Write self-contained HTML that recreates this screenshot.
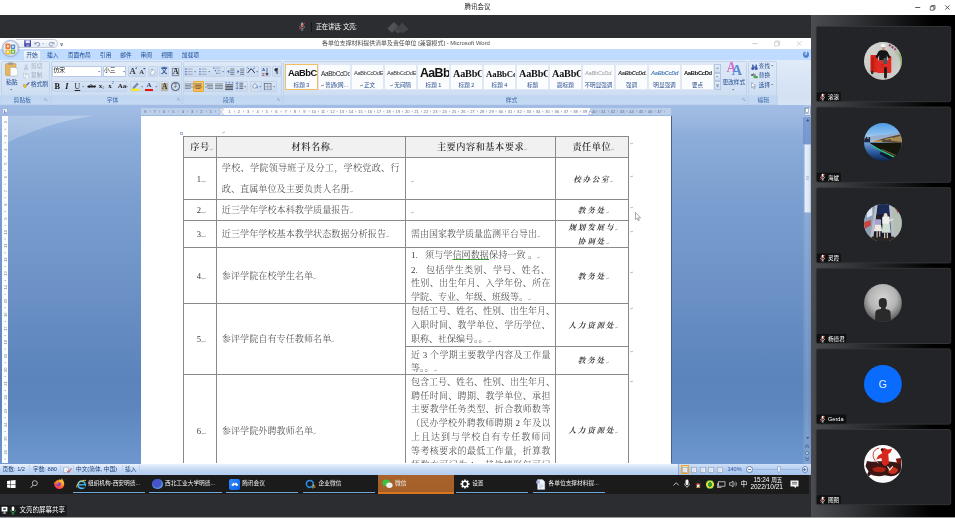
<!DOCTYPE html><html lang="zh"><head><meta charset="utf-8"><title>腾讯会议</title><style>
*{box-sizing:border-box;margin:0;padding:0}
html,body{width:955px;height:518px;overflow:hidden;background:#fff}
body{font-family:"Liberation Sans","Noto Sans CJK SC",sans-serif;position:relative;color:#000}
.a{position:absolute}
.t{position:absolute;white-space:nowrap;line-height:1}
.serif{font-family:"Liberation Serif","Noto Serif CJK SC",serif}
/* top bars */
#top{left:0;top:0;width:955px;height:15px;background:#fff}
#dark{left:0;top:15px;width:811px;height:23px;background:#2b2d30}
#bottomdark{left:0;top:494px;width:811px;height:24px;background:#2b2d30}
#panel{left:811px;top:15px;width:144px;height:503px;background:linear-gradient(to right,#4a4c50 0%,#37383b 25%,#1c1d1f 55%,#000 85%)}
.tile{position:absolute;left:816px;width:135px;height:76px;background:#232427;border:1px solid #313336;border-radius:2px}
.av{position:absolute;left:864.3px;width:37.9px;height:37.9px;border-radius:50%;overflow:hidden}
.nm{position:absolute;left:817px;height:9.5px;background:#17181a;border-radius:1px}
.nm span{position:absolute;left:9.5px;top:1.8px;font-size:5.8px;line-height:1;color:#fff;white-space:nowrap}
/* word */
#word{left:0;top:38px;width:811px;height:436px;background:#bfdbff;overflow:hidden}
#wtitle{left:0;top:0;width:811px;height:11px;background:#fff}
#tabs{left:0;top:11px;width:811px;height:11px;background:#bfdbff}
#ribbon{left:0;top:22px;width:811px;height:45px;background:linear-gradient(to bottom,#e1ebf8 0%,#dbe6f6 30%,#d3e1f3 80%,#d7e4f5 100%)}
#rlabels{left:0;top:58px;width:778px;height:8.5px;background:#c1d7f1}
.gsep{position:absolute;top:23px;width:1px;height:43px;background:linear-gradient(to bottom,#d9e6f7,#a9c4e6)}
.gl{position:absolute;top:59.3px;font-size:5.8px;line-height:1;color:#3e6aaa;white-space:nowrap}
#doc{left:0;top:67px;width:811px;height:360px;background:linear-gradient(to bottom,#a2bde5 0%,#9db9e2 3%,#8cadda 9%,#7a9ecf 27%,#6a90c5 54%,#5b84bc 76%,#5d86bf 84%,#6e98cf 100%)}
#page{left:141.4px;top:10.8px;width:529.6px;height:352px;background:#fff}
#status{left:0;top:427px;width:811px;height:9.4px;background:linear-gradient(to bottom,#d6e6fa,#bed6f4 50%,#a9c8ef)}
#taskbar{left:0;top:474.4px;width:811px;height:19.4px;background:#1c1d1f}
#root{position:absolute;left:0;top:0;width:955px;height:518px;overflow:hidden;will-change:transform;transform:translateZ(0)}</style></head><body><div id="root">
<div class="a" id="top"></div>
<div class="a" id="dark"></div>
<div class="a" id="panel"></div>
<div class="a" id="word"><div class="a" id="wtitle"></div><div class="a" id="tabs"></div><div class="a" id="ribbon"></div><div class="a" id="rlabels"></div><div class="a" id="doc"><div class="a" id="page"></div></div><div class="a" id="status"></div></div>
<div class="a" id="taskbar"></div>
<div class="a" id="bottomdark"></div>
<div class="a" style="left:16px;top:39px;width:41.5px;height:9.4px;border:0.6px solid #c6cdd9;border-left:none;border-radius:0 5px 5px 0;background:linear-gradient(#fbfcfe,#e4ebf5)"></div>
<div class="a" style="left:2.1px;top:40px;width:17.4px;height:17.4px;border-radius:50%;background:radial-gradient(circle at 50% 35%,#ffffff 0%,#e6edf7 45%,#b9c9e0 100%);border:0.6px solid #9fb2cf;box-shadow:0 0 1.5px rgba(80,100,140,.5)"></div>
<svg class="a" style="left:5.4px;top:42.8px" width="10.6" height="12" viewBox="0 0 10.6 12"><rect x="0.4" y="0.6" width="5" height="5.4" rx="1" fill="#ee7a32"/><rect x="5.8" y="1.4" width="4.4" height="4.6" rx=".9" fill="#4a8ad8"/><rect x="0.4" y="6.4" width="5" height="5" rx="1" fill="#f2bc30"/><rect x="5.8" y="6.4" width="4.4" height="4.4" rx=".9" fill="#72b23e"/><rect x="1.9" y="2.3" width="2" height="2" fill="#fff" opacity=".85"/><rect x="7" y="2.8" width="1.9" height="1.9" fill="#fff" opacity=".85"/><rect x="1.9" y="7.9" width="2" height="2" fill="#fff" opacity=".85"/><rect x="7" y="7.7" width="1.9" height="1.9" fill="#fff" opacity=".85"/></svg>
<svg class="a" style="left:23.6px;top:40px" width="7.6" height="7" viewBox="0 0 7.6 7"><rect x="0.2" y="0.2" width="7" height="6.6" rx=".5" fill="#4646a8"/><rect x="1.6" y="0.4" width="4.2" height="2.8" fill="#e8ecf8"/><rect x="2.2" y="4.4" width="3.2" height="2.4" fill="#8a8fd0"/></svg>
<svg class="a" style="left:34px;top:40.5px" width="7" height="6" viewBox="0 0 7 6"><path d="M1.2 2.6C3 0.6 6 1.4 5.6 3.6C5.4 4.8 4.4 5.2 3.4 5.2" stroke="#8b9cbd" stroke-width="1.1" fill="none"/><path d="M0.3 0.8v2.8h2.8z" fill="#8b9cbd"/></svg>
<svg class="a" style="left:42.0px;top:43.400000000000006px" width="2.4" height="1.6" viewBox="0 0 2.4 1.6"><path d="M0 0h2.4L1.2 1.4z" fill="#a0aabd" opacity=".8"/></svg>
<svg class="a" style="left:47.6px;top:40.5px" width="7" height="6" viewBox="0 0 7 6"><path d="M5.2 2.2C3.6 0.6 1 1.4 1.2 3.4C1.4 5 3.4 5.6 5 4.6" stroke="#9aa6bf" stroke-width="1.1" fill="none"/><path d="M6.4 0.4v2.8h-2.8z" fill="#9aa6bf"/></svg>
<svg class="a" style="left:60px;top:42.6px" width="3.4" height="3.4" viewBox="0 0 3.4 3.4"><path d="M0.2 0.3h3" stroke="#4a5878" stroke-width=".7"/><path d="M0.2 1.4h3L1.7 3.2z" fill="#4a5878"/></svg>
<div class="t" style="left:322px;top:41px;font-size:5.92px;color:#4a4a4a;">各单位支撑材料提供清单及责任单位 [兼容模式] - Microsoft Word</div>
<svg class="a" style="left:750px;top:40px" width="56" height="8" viewBox="0 0 56 8"><path d="M2.4 3.6h5" stroke="#b9bdc4" stroke-width=".8"/><path d="M24.6 2h4v4h-4z M25.6 2v-1h4v4h-1" stroke="#c0c4ca" stroke-width=".7" fill="none"/><path d="M46.8 1.2l4.6 4.6M51.4 1.2l-4.6 4.6" stroke="#c4c8ce" stroke-width=".8"/></svg>
<div class="a" style="left:22.8px;top:49.6px;width:18.6px;height:11.4px;border:0.6px solid #c9dbf2;border-bottom:none;border-radius:1.5px 1.5px 0 0;background:linear-gradient(#f2f7fd,#dde9f8)"></div>
<div class="t" style="left:26.2px;top:52.6px;font-size:5.75px;color:#1f4a8f;">开始</div>
<div class="t" style="left:47px;top:52.6px;font-size:5.75px;color:#1f4a8f;">插入</div>
<div class="t" style="left:67.8px;top:52.6px;font-size:5.75px;color:#1f4a8f;">页面布局</div>
<div class="t" style="left:99.9px;top:52.6px;font-size:5.75px;color:#1f4a8f;">引用</div>
<div class="t" style="left:120.2px;top:52.6px;font-size:5.75px;color:#1f4a8f;">邮件</div>
<div class="t" style="left:140.6px;top:52.6px;font-size:5.75px;color:#1f4a8f;">审阅</div>
<div class="t" style="left:161.2px;top:52.6px;font-size:5.75px;color:#1f4a8f;">视图</div>
<div class="t" style="left:181.8px;top:52.6px;font-size:5.75px;color:#1f4a8f;">加载项</div>
<div class="a" style="left:802.6px;top:51.4px;width:6.6px;height:6.6px;border-radius:50%;background:radial-gradient(circle at 40% 35%,#7fb0f0,#2f63c8);border:0.5px solid #5580c8"></div>
<div class="t" style="left:804.6px;top:52.4px;font-size:4.8px;color:#fff;font-weight:bold">?</div>
<div class="a" style="left:1.4px;top:61px;width:48.2px;height:43.6px;border:0.6px solid #bfd3ec;border-radius:1.6px;background:linear-gradient(to bottom,#dfe9f7 0%,#d7e4f5 40%,#cedef2 79%,#c1d7f0 80%,#c4d9f3 100%)"></div>
<div class="gl" style="left:13.6px;top:97.5px">剪贴板</div>
<svg class="a" style="left:44.4px;top:97.8px" width="3.4" height="3.4" viewBox="0 0 3.4 3.4"><path d="M0.3 2.6V0.3h2.3" stroke="#8aa2c4" stroke-width=".6" fill="none"/><path d="M1.4 1.4l1.6 1.6M3.1 1.9v1.2h-1.2" stroke="#8aa2c4" stroke-width=".6" fill="none"/></svg>
<div class="a" style="left:50.6px;top:61px;width:131.4px;height:43.6px;border:0.6px solid #bfd3ec;border-radius:1.6px;background:linear-gradient(to bottom,#dfe9f7 0%,#d7e4f5 40%,#cedef2 79%,#c1d7f0 80%,#c4d9f3 100%)"></div>
<div class="gl" style="left:106.8px;top:97.5px">字体</div>
<svg class="a" style="left:176.8px;top:97.8px" width="3.4" height="3.4" viewBox="0 0 3.4 3.4"><path d="M0.3 2.6V0.3h2.3" stroke="#8aa2c4" stroke-width=".6" fill="none"/><path d="M1.4 1.4l1.6 1.6M3.1 1.9v1.2h-1.2" stroke="#8aa2c4" stroke-width=".6" fill="none"/></svg>
<div class="a" style="left:183px;top:61px;width:99.3px;height:43.6px;border:0.6px solid #bfd3ec;border-radius:1.6px;background:linear-gradient(to bottom,#dfe9f7 0%,#d7e4f5 40%,#cedef2 79%,#c1d7f0 80%,#c4d9f3 100%)"></div>
<div class="gl" style="left:223px;top:97.5px">段落</div>
<svg class="a" style="left:277.1px;top:97.8px" width="3.4" height="3.4" viewBox="0 0 3.4 3.4"><path d="M0.3 2.6V0.3h2.3" stroke="#8aa2c4" stroke-width=".6" fill="none"/><path d="M1.4 1.4l1.6 1.6M3.1 1.9v1.2h-1.2" stroke="#8aa2c4" stroke-width=".6" fill="none"/></svg>
<div class="a" style="left:283.2px;top:61px;width:464.2px;height:43.6px;border:0.6px solid #bfd3ec;border-radius:1.6px;background:linear-gradient(to bottom,#dfe9f7 0%,#d7e4f5 40%,#cedef2 79%,#c1d7f0 80%,#c4d9f3 100%)"></div>
<div class="gl" style="left:505.8px;top:97.5px">样式</div>
<svg class="a" style="left:742.1999999999999px;top:97.8px" width="3.4" height="3.4" viewBox="0 0 3.4 3.4"><path d="M0.3 2.6V0.3h2.3" stroke="#8aa2c4" stroke-width=".6" fill="none"/><path d="M1.4 1.4l1.6 1.6M3.1 1.9v1.2h-1.2" stroke="#8aa2c4" stroke-width=".6" fill="none"/></svg>
<div class="a" style="left:748.2px;top:61px;width:29.2px;height:43.6px;border:0.6px solid #bfd3ec;border-radius:1.6px;background:linear-gradient(to bottom,#dfe9f7 0%,#d7e4f5 40%,#cedef2 79%,#c1d7f0 80%,#c4d9f3 100%)"></div>
<div class="gl" style="left:757.4px;top:97.5px">编辑</div>
<svg class="a" style="left:4.8px;top:62.4px" width="13.4" height="14.6" viewBox="0 0 13.4 14.6"><rect x="0.5" y="1.6" width="10.4" height="12" rx="1" fill="#e8b45c" stroke="#b98838" stroke-width=".5"/><rect x="3.2" y="0.4" width="5" height="2.4" rx=".6" fill="#8f98a8"/><path d="M5.2 5.4h5.4l2.2 2.2v6.4H5.2z" fill="#fbfcfe" stroke="#9aa6b8" stroke-width=".5"/></svg>
<div class="t" style="left:5.9px;top:80.4px;font-size:5.75px;color:#1f4a8f;">粘贴</div>
<svg class="a" style="left:10.4px;top:89.0px" width="2.4" height="1.6" viewBox="0 0 2.4 1.6"><path d="M0 0h2.4L1.2 1.4z" fill="#5a6a85" opacity=".8"/></svg>
<svg class="a" style="left:23.6px;top:64px" width="4.4" height="6" viewBox="0 0 4.4 6"><path d="M1 0.4l2.4 3.4M3.4 0.4L1 3.8" stroke="#a7b0c0" stroke-width=".6"/><circle cx="1" cy="4.8" r=".9" fill="none" stroke="#a7b0c0" stroke-width=".6"/><circle cx="3.4" cy="4.8" r=".9" fill="none" stroke="#a7b0c0" stroke-width=".6"/></svg>
<div class="t" style="left:30.9px;top:64.2px;font-size:5.75px;color:#a3acbc;">剪切</div>
<svg class="a" style="left:23px;top:72.6px" width="6" height="6.4" viewBox="0 0 6 6.4"><rect x="0.4" y="0.4" width="3.4" height="4.2" fill="#f4f6fa" stroke="#b4bccb" stroke-width=".5"/><rect x="2.2" y="1.8" width="3.4" height="4.2" fill="#f4f6fa" stroke="#b4bccb" stroke-width=".5"/></svg>
<div class="t" style="left:30.9px;top:73px;font-size:5.75px;color:#a3acbc;">复制</div>
<svg class="a" style="left:23px;top:82px" width="7" height="6.4" viewBox="0 0 7 6.4"><path d="M0.6 2.2l3.2 1.4-1.4 2.4-2-1.4z" fill="#f0c02c" stroke="#a8841c" stroke-width=".4"/><path d="M3.6 3l2.8-2.6" stroke="#4a5a88" stroke-width="1.1"/></svg>
<div class="t" style="left:30.8px;top:82.4px;font-size:5.75px;color:#1f4a8f;">格式刷</div>
<div class="a" style="left:52.4px;top:66.4px;width:49.6px;height:10.6px;background:#fff;border:0.6px solid #b7cbe6"></div>
<div class="t" style="left:53.6px;top:68.4px;font-size:5.75px;color:#111;">仿宋</div>
<svg class="a" style="left:98.39999999999999px;top:71.2px" width="2.4" height="1.6" viewBox="0 0 2.4 1.6"><path d="M0 0h2.4L1.2 1.4z" fill="#5a6a85" opacity=".8"/></svg>
<div class="a" style="left:102.8px;top:66.4px;width:23.4px;height:10.6px;background:#fff;border:0.6px solid #b7cbe6"></div>
<div class="t" style="left:104px;top:68.4px;font-size:5.75px;color:#111;">小三</div>
<svg class="a" style="left:122.6px;top:71.2px" width="2.4" height="1.6" viewBox="0 0 2.4 1.6"><path d="M0 0h2.4L1.2 1.4z" fill="#5a6a85" opacity=".8"/></svg>
<div class="a" style="left:128px;top:66.4px;width:18.4px;height:10.6px;border:0.5px solid #c3d4ea;border-radius:1px;background:linear-gradient(#d7e4f5,#c9daf0)"></div>
<div class="a" style="left:148.2px;top:66.4px;width:9.4px;height:10.6px;border:0.5px solid #c3d4ea;border-radius:1px;background:linear-gradient(#d7e4f5,#c9daf0)"></div>
<div class="a" style="left:159.4px;top:66.4px;width:9.4px;height:10.6px;border:0.5px solid #c3d4ea;border-radius:1px;background:linear-gradient(#d7e4f5,#c9daf0)"></div>
<div class="a" style="left:170.6px;top:66.4px;width:9.4px;height:10.6px;border:0.5px solid #c3d4ea;border-radius:1px;background:linear-gradient(#d7e4f5,#c9daf0)"></div>
<div class="t" style="left:129.6px;top:66.6px;font-size:8.6px;color:#3a3a3a;font-family:'Liberation Serif',serif;font-weight:bold">A</div>
<svg class="a" style="left:134.6px;top:67.4px" width="2.6" height="2" viewBox="0 0 2.6 2"><path d="M0 1.8h2.6L1.3 0z" fill="#3a5fa8"/></svg>
<div class="t" style="left:139.2px;top:68.6px;font-size:6.6px;color:#3a3a3a;font-family:'Liberation Serif',serif;font-weight:bold">A</div>
<svg class="a" style="left:143.2px;top:67.6px" width="2.6" height="2" viewBox="0 0 2.6 2"><path d="M0 0h2.6L1.3 1.8z" fill="#3a5fa8"/></svg>
<svg class="a" style="left:149.4px;top:67.6px" width="7.4" height="8" viewBox="0 0 7.4 8"><path d="M1 5.2l3.4-3.6 2.4 2.2-3.4 3.6z" fill="#f4f6fa" stroke="#8a94a8" stroke-width=".5"/><path d="M1.2 2.4c1-1.6 2.4-1.8 3.4-.8" stroke="#8a94a8" stroke-width=".6" fill="none"/></svg>
<div class="t" style="left:160.9px;top:67.6px;font-size:6.4px;color:#2b4f9a;font-weight:bold">文</div>
<svg class="a" style="left:161px;top:67px" width="6.6" height="1.6" viewBox="0 0 6.6 1.6"><path d="M0.4 0.8h5.8" stroke="#2b4f9a" stroke-width=".9"/></svg>
<div class="a" style="left:172.2px;top:67.6px;width:6.4px;height:8.2px;border:0.6px solid #8a94a8"></div>
<div class="t" style="left:172.9px;top:67.8px;font-size:7.6px;color:#2a2a2a;font-family:'Liberation Serif',serif;font-weight:bold">A</div>
<div class="a" style="left:52.4px;top:81.2px;width:74.4px;height:10.8px;border:0.5px solid #c3d4ea;border-radius:1px;background:linear-gradient(#d7e4f5,#c9daf0)"></div>
<div class="a" style="left:129.6px;top:81.2px;width:28.6px;height:10.8px;border:0.5px solid #c3d4ea;border-radius:1px;background:linear-gradient(#d7e4f5,#c9daf0)"></div>
<div class="a" style="left:159.4px;top:81.2px;width:9.4px;height:10.8px;border:0.5px solid #c3d4ea;border-radius:1px;background:linear-gradient(#d7e4f5,#c9daf0)"></div>
<div class="a" style="left:170.6px;top:81.2px;width:9.4px;height:10.8px;border:0.5px solid #c3d4ea;border-radius:1px;background:linear-gradient(#d7e4f5,#c9daf0)"></div>
<div class="t" style="left:54.6px;top:82.6px;font-size:8.2px;color:#111;font-family:'Liberation Serif',serif;font-weight:bold">B</div>
<div class="t" style="left:65.2px;top:82.6px;font-size:8.2px;color:#111;font-family:'Liberation Serif',serif;font-weight:bold;font-style:italic">I</div>
<div class="t" style="left:74.6px;top:82.8px;font-size:7.8px;color:#222;font-family:'Liberation Serif',serif;text-decoration:underline">U</div>
<svg class="a" style="left:82.39999999999999px;top:86.2px" width="2.4" height="1.6" viewBox="0 0 2.4 1.6"><path d="M0 0h2.4L1.2 1.4z" fill="#6a7890" opacity=".8"/></svg>
<div class="t" style="left:87.4px;top:83.8px;font-size:5.6px;color:#222;font-family:'Liberation Serif',serif;font-weight:bold;text-decoration:line-through">abe</div>
<div class="t" style="left:98.8px;top:83.4px;font-size:7px;color:#222;font-family:'Liberation Serif',serif;font-weight:bold">x</div>
<div class="t" style="left:102.6px;top:87.2px;font-size:3.4px;color:#3a5fa8;">2</div>
<div class="t" style="left:108.2px;top:83.4px;font-size:7px;color:#222;font-family:'Liberation Serif',serif;font-weight:bold">x</div>
<div class="t" style="left:112px;top:82.4px;font-size:3.4px;color:#3a5fa8;">2</div>
<div class="t" style="left:117.8px;top:83.2px;font-size:7px;color:#222;font-family:'Liberation Serif',serif;font-weight:bold">Aa</div>
<svg class="a" style="left:126.2px;top:86.2px" width="2.4" height="1.6" viewBox="0 0 2.4 1.6"><path d="M0 0h2.4L1.2 1.4z" fill="#6a7890" opacity=".8"/></svg>
<svg class="a" style="left:131.4px;top:82px" width="8.6" height="9" viewBox="0 0 8.6 9"><path d="M2.2 5.2l4-4.2 1.2 1-4 4.2-1.6.4z" fill="#7a88a8" stroke="#4a5878" stroke-width=".4"/><rect x="0.2" y="6.8" width="8.2" height="2" fill="#ffee00"/></svg>
<svg class="a" style="left:141.0px;top:86.2px" width="2.4" height="1.6" viewBox="0 0 2.4 1.6"><path d="M0 0h2.4L1.2 1.4z" fill="#6a7890" opacity=".8"/></svg>
<div class="t" style="left:146.6px;top:82.4px;font-size:7px;color:#2b3f7a;font-family:'Liberation Serif',serif;font-weight:bold">A</div>
<div class="a" style="left:145px;top:88.8px;width:8px;height:2px;background:#ee1111"></div>
<svg class="a" style="left:154.60000000000002px;top:86.2px" width="2.4" height="1.6" viewBox="0 0 2.4 1.6"><path d="M0 0h2.4L1.2 1.4z" fill="#6a7890" opacity=".8"/></svg>
<div class="a" style="left:161px;top:82.6px;width:6.6px;height:8px;background:#b9b3a4"></div>
<div class="t" style="left:161.9px;top:82.8px;font-size:7.4px;color:#3a2f22;font-family:'Liberation Serif',serif;font-weight:bold">A</div>
<div class="a" style="left:171.2px;top:82.2px;width:8.4px;height:8.4px;border:0.7px solid #4a5468;border-radius:50%"></div>
<div class="t" style="left:173px;top:83.8px;font-size:4.8px;color:#333;">字</div>
<div class="a" style="left:183.8px;top:66.4px;width:41.2px;height:10.6px;border:0.5px solid #c3d4ea;border-radius:1px;background:linear-gradient(#d7e4f5,#c9daf0)"></div>
<div class="a" style="left:226.4px;top:66.4px;width:18.6px;height:10.6px;border:0.5px solid #c3d4ea;border-radius:1px;background:linear-gradient(#d7e4f5,#c9daf0)"></div>
<div class="a" style="left:246px;top:66.4px;width:12.6px;height:10.6px;border:0.5px solid #c3d4ea;border-radius:1px;background:linear-gradient(#d7e4f5,#c9daf0)"></div>
<div class="a" style="left:260.6px;top:66.4px;width:10.0px;height:10.6px;border:0.5px solid #c3d4ea;border-radius:1px;background:linear-gradient(#d7e4f5,#c9daf0)"></div>
<div class="a" style="left:272px;top:66.4px;width:9.0px;height:10.6px;border:0.5px solid #c3d4ea;border-radius:1px;background:linear-gradient(#d7e4f5,#c9daf0)"></div>
<svg class="a" style="left:184.8px;top:67.8px" width="8" height="7.4" viewBox="0 0 8 7.4"><rect x="0.3" y="0.4" width="1.3" height="1.3" fill="#3a62b0"/><path d="M2.6 1.0h5" stroke="#7a8498" stroke-width=".6"/><rect x="0.3" y="3.0" width="1.3" height="1.3" fill="#3a62b0"/><path d="M2.6 3.6h5" stroke="#7a8498" stroke-width=".6"/><rect x="0.3" y="5.6000000000000005" width="1.3" height="1.3" fill="#3a62b0"/><path d="M2.6 6.2h5" stroke="#7a8498" stroke-width=".6"/></svg>
<svg class="a" style="left:194.20000000000002px;top:71.2px" width="2.4" height="1.6" viewBox="0 0 2.4 1.6"><path d="M0 0h2.4L1.2 1.4z" fill="#6a7890" opacity=".8"/></svg>
<svg class="a" style="left:199px;top:67.8px" width="8" height="7.4" viewBox="0 0 8 7.4"><rect x="0.3" y="0.4" width="1.3" height="1.3" fill="#4a70c0"/><path d="M2.6 1.0h5" stroke="#7a8498" stroke-width=".6"/><rect x="0.3" y="3.0" width="1.3" height="1.3" fill="#4a70c0"/><path d="M2.6 3.6h5" stroke="#7a8498" stroke-width=".6"/><rect x="0.3" y="5.6000000000000005" width="1.3" height="1.3" fill="#4a70c0"/><path d="M2.6 6.2h5" stroke="#7a8498" stroke-width=".6"/></svg>
<svg class="a" style="left:208.4px;top:71.2px" width="2.4" height="1.6" viewBox="0 0 2.4 1.6"><path d="M0 0h2.4L1.2 1.4z" fill="#6a7890" opacity=".8"/></svg>
<svg class="a" style="left:212.8px;top:67.4px" width="8" height="8.4" viewBox="0 0 8 8.4"><rect x="0.2" y="0.5" width="1.2" height="1.2" fill="#3a62b0"/><path d="M2.2 1.1h5.4" stroke="#7a8498" stroke-width=".6"/><rect x="1.8" y="3.1" width="1.2" height="1.2" fill="#3a62b0"/><path d="M3.8 3.7h3.8" stroke="#7a8498" stroke-width=".6"/><rect x="3.4" y="5.7" width="1.2" height="1.2" fill="#3a62b0"/><path d="M5.2 6.3h2.4" stroke="#7a8498" stroke-width=".6"/></svg>
<svg class="a" style="left:221.8px;top:71.2px" width="2.4" height="1.6" viewBox="0 0 2.4 1.6"><path d="M0 0h2.4L1.2 1.4z" fill="#6a7890" opacity=".8"/></svg>
<svg class="a" style="left:227.2px;top:67.8px" width="7.6" height="7.4" viewBox="0 0 7.6 7.4"><path d="M0.2 3.6l2-1.6v3.2z" fill="#3a62b0"/><path d="M3.2 1h4.2M3.2 2.8h4.2M3.2 4.6h4.2M3.2 6.4h4.2" stroke="#4a5060" stroke-width=".65"/></svg>
<svg class="a" style="left:236.6px;top:67.8px" width="7.6" height="7.4" viewBox="0 0 7.6 7.4"><path d="M2.4 3.6l-2-1.6v3.2z" fill="#3a62b0"/><path d="M3.2 1h4.2M3.2 2.8h4.2M3.2 4.6h4.2M3.2 6.4h4.2" stroke="#4a5060" stroke-width=".65"/></svg>
<svg class="a" style="left:246.8px;top:67.4px" width="8.4" height="7" viewBox="0 0 8.4 7"><path d="M0.6 6l3.6-4.4L7.8 6" stroke="#2a3a4a" stroke-width="1" fill="none"/><path d="M0.4 0.6l1.8 1.6M8 0.6L6.2 2.2" stroke="#3a62b0" stroke-width=".9"/></svg>
<svg class="a" style="left:256.0px;top:71.2px" width="2.4" height="1.6" viewBox="0 0 2.4 1.6"><path d="M0 0h2.4L1.2 1.4z" fill="#6a7890" opacity=".8"/></svg>
<svg class="a" style="left:262.2px;top:66.8px" width="6.8" height="9.6" viewBox="0 0 6.8 9.6"><text x="0" y="4.2" font-size="4.4" font-family="Liberation Sans,sans-serif" fill="#3a62b0" font-weight="bold">A</text><text x="0" y="8.8" font-size="4.4" font-family="Liberation Sans,sans-serif" fill="#c03030" font-weight="bold">Z</text><path d="M5 0.8v7M3.8 6.6L5 8.4l1.2-1.8z" stroke="#3a4050" stroke-width=".7" fill="#3a4050"/></svg>
<svg class="a" style="left:274.4px;top:68.4px" width="4.6" height="6.4" viewBox="0 0 4.6 6.4"><path d="M2.5 0.5v5.4M3.6 0.5v5.4M4 0.5H2a1.3 1.3 0 000 2.7h.5" stroke="#2a3040" stroke-width=".6" fill="#2a3040"/></svg>
<div class="a" style="left:183.8px;top:81.2px;width:50.2px;height:10.8px;border:0.5px solid #c3d4ea;border-radius:1px;background:linear-gradient(#d7e4f5,#c9daf0)"></div>
<div class="a" style="left:235.4px;top:81.2px;width:12.2px;height:10.8px;border:0.5px solid #c3d4ea;border-radius:1px;background:linear-gradient(#d7e4f5,#c9daf0)"></div>
<div class="a" style="left:249.6px;top:81.2px;width:12.8px;height:10.8px;border:0.5px solid #c3d4ea;border-radius:1px;background:linear-gradient(#d7e4f5,#c9daf0)"></div>
<div class="a" style="left:263.2px;top:81.2px;width:13.4px;height:10.8px;border:0.5px solid #c3d4ea;border-radius:1px;background:linear-gradient(#d7e4f5,#c9daf0)"></div>
<div class="a" style="left:193.4px;top:81px;width:10.2px;height:11px;border:0.6px solid #e8a838;border-radius:1px;background:linear-gradient(#fdd78a,#f9b850 50%,#fcc060)"></div>
<svg class="a" style="left:184.6px;top:82.6px" width="8.4" height="7.2" viewBox="0 0 8.4 7.2"><path d="M0 0.9h8" stroke="#747a84" stroke-width=".8"/><path d="M0 2.45h6" stroke="#747a84" stroke-width=".8"/><path d="M0 4.0h8" stroke="#747a84" stroke-width=".8"/><path d="M0 5.550000000000001h5.4" stroke="#747a84" stroke-width=".8"/></svg>
<svg class="a" style="left:194.4px;top:82.6px" width="8.4" height="7.2" viewBox="0 0 8.4 7.2"><path d="M0.2 0.9h7.8" stroke="#6a5a3a" stroke-width=".8"/><path d="M1.2 2.45h5.8" stroke="#6a5a3a" stroke-width=".8"/><path d="M0.2 4.0h7.8" stroke="#6a5a3a" stroke-width=".8"/><path d="M1.6 5.550000000000001h5.0" stroke="#6a5a3a" stroke-width=".8"/></svg>
<svg class="a" style="left:204.8px;top:82.6px" width="8.4" height="7.2" viewBox="0 0 8.4 7.2"><path d="M0 0.9h8" stroke="#747a84" stroke-width=".8"/><path d="M2 2.45h6" stroke="#747a84" stroke-width=".8"/><path d="M0 4.0h8" stroke="#747a84" stroke-width=".8"/><path d="M2.6 5.550000000000001h5.4" stroke="#747a84" stroke-width=".8"/></svg>
<svg class="a" style="left:214.8px;top:82.6px" width="8.4" height="7.2" viewBox="0 0 8.4 7.2"><path d="M0 0.9h8" stroke="#747a84" stroke-width=".8"/><path d="M0 2.45h8" stroke="#747a84" stroke-width=".8"/><path d="M0 4.0h8" stroke="#747a84" stroke-width=".8"/><path d="M0 5.550000000000001h8" stroke="#747a84" stroke-width=".8"/></svg>
<svg class="a" style="left:224.8px;top:81.6px" width="8.6" height="9" viewBox="0 0 8.6 9"><path d="M0.4 0.8h1.4M3.4 0.8h1.8M6.8 0.8h1.4" stroke="#3a62b0" stroke-width=".9"/><path d="M0.2 2.8h8.2M0.2 4.4h8.2M0.2 6h8.2M0.2 7.6h8.2" stroke="#3a4048" stroke-width=".9"/></svg>
<svg class="a" style="left:236.4px;top:82.4px" width="7.4" height="7.6" viewBox="0 0 7.4 7.6"><path d="M1.2 0.6v6.4M0.2 1.8l1-1.4 1 1.4M0.2 5.8l1 1.4 1-1.4" stroke="#3a62b0" stroke-width=".6" fill="none"/><path d="M3.4 1.2h3.8M3.4 3h3.8M3.4 4.8h3.8M3.4 6.6h3.8" stroke="#4a5060" stroke-width=".8"/></svg>
<svg class="a" style="left:244.4px;top:86.2px" width="2.4" height="1.6" viewBox="0 0 2.4 1.6"><path d="M0 0h2.4L1.2 1.4z" fill="#6a7890" opacity=".8"/></svg>
<svg class="a" style="left:250.6px;top:82px" width="7.4" height="9" viewBox="0 0 7.4 9"><path d="M1.4 4.4l2.6-3 2.4 2.6-2.6 2.6z" fill="#e8eef8" stroke="#4a5a88" stroke-width=".5"/><path d="M6.2 4.2c.8 1 .8 1.8 0 2.2-.8-.4-.8-1.2 0-2.2z" fill="#3a78d0"/><rect x="0.4" y="7.2" width="6.6" height="1.5" fill="#f8f8f8" stroke="#b0b8c8" stroke-width=".3"/></svg>
<svg class="a" style="left:259.2px;top:86.2px" width="2.4" height="1.6" viewBox="0 0 2.4 1.6"><path d="M0 0h2.4L1.2 1.4z" fill="#6a7890" opacity=".8"/></svg>
<svg class="a" style="left:264.2px;top:82.6px" width="7.4" height="7.4" viewBox="0 0 7.4 7.4"><rect x="0.4" y="0.4" width="6.6" height="6.6" fill="none" stroke="#5a6478" stroke-width=".7"/><path d="M3.7 0.4v6.6M0.4 3.7h6.6" stroke="#8a94a8" stroke-width=".6"/></svg>
<svg class="a" style="left:273.0px;top:86.2px" width="2.4" height="1.6" viewBox="0 0 2.4 1.6"><path d="M0 0h2.4L1.2 1.4z" fill="#6a7890" opacity=".8"/></svg>
<div class="a" style="left:285.4px;top:64.4px;width:32.2px;height:25.4px;background:#fbfcfe;border:0.8px solid #f0bf62;overflow:hidden"><div class="t" style="left:1.6px;top:3.79px;font-size:9.3px;color:#111;font-family:'Liberation Sans',sans-serif;font-weight:bold;letter-spacing:-0.45px">AaBbCcDd</div><div class="t" style="left:0;width:100%;text-align:center;top:17.4px;font-size:5.6px;color:#2a4f8f">标题 3</div></div>
<div class="a" style="left:318.4px;top:64.4px;width:32.2px;height:25.4px;background:#fbfcfe;border:0.5px solid #dfe8f4;overflow:hidden"><div class="t" style="left:1.6px;top:5.36px;font-size:6.5px;color:#222;font-family:'Liberation Sans',sans-serif;letter-spacing:-0.3px">AaBbCcDd</div><div class="t" style="left:0;width:100%;text-align:center;top:17.4px;font-size:5.6px;color:#2a4f8f"><span style="font-size:4px;color:#555">↵ </span>普通(网...</div></div>
<div class="a" style="left:351.4px;top:64.4px;width:32.2px;height:25.4px;background:#fbfcfe;border:0.5px solid #dfe8f4;overflow:hidden"><div class="t" style="left:1.6px;top:5.81px;font-size:5.7px;color:#333;font-family:'Liberation Sans',sans-serif;letter-spacing:-0.3px">AaBbCcDdEe</div><div class="t" style="left:0;width:100%;text-align:center;top:17.4px;font-size:5.6px;color:#2a4f8f"><span style="font-size:4px;color:#555">↵ </span>正文</div></div>
<div class="a" style="left:384.4px;top:64.4px;width:32.2px;height:25.4px;background:#fbfcfe;border:0.5px solid #dfe8f4;overflow:hidden"><div class="t" style="left:1.6px;top:5.81px;font-size:5.7px;color:#333;font-family:'Liberation Sans',sans-serif;letter-spacing:-0.3px">AaBbCcDdEe</div><div class="t" style="left:0;width:100%;text-align:center;top:17.4px;font-size:5.6px;color:#2a4f8f"><span style="font-size:4px;color:#555">↵ </span>无间隔</div></div>
<div class="a" style="left:417.4px;top:64.4px;width:32.2px;height:25.4px;background:#fbfcfe;border:0.5px solid #dfe8f4;overflow:hidden"><div class="t" style="left:1.6px;top:2.06px;font-size:12.4px;color:#111;font-family:'Liberation Sans',sans-serif;font-weight:bold;letter-spacing:-0.6px">AaBbCc</div><div class="t" style="left:0;width:100%;text-align:center;top:17.4px;font-size:5.6px;color:#2a4f8f">标题 1</div></div>
<div class="a" style="left:450.4px;top:64.4px;width:32.2px;height:25.4px;background:#fbfcfe;border:0.5px solid #dfe8f4;overflow:hidden"><div class="t" style="left:1.6px;top:3.29px;font-size:10.2px;color:#111;font-family:'Liberation Serif',serif;font-weight:bold;letter-spacing:-0.2px">AaBbCc</div><div class="t" style="left:0;width:100%;text-align:center;top:17.4px;font-size:5.6px;color:#2a4f8f">标题 2</div></div>
<div class="a" style="left:483.4px;top:64.4px;width:32.2px;height:25.4px;background:#fbfcfe;border:0.5px solid #dfe8f4;overflow:hidden"><div class="t" style="left:1.6px;top:4.13px;font-size:8.7px;color:#111;font-family:'Liberation Serif',serif;font-weight:bold;letter-spacing:-0.1px">AaBbCcD</div><div class="t" style="left:0;width:100%;text-align:center;top:17.4px;font-size:5.6px;color:#2a4f8f">标题 4</div></div>
<div class="a" style="left:516.4px;top:64.4px;width:32.2px;height:25.4px;background:#fbfcfe;border:0.5px solid #dfe8f4;overflow:hidden"><div class="t" style="left:1.6px;top:3.29px;font-size:10.2px;color:#111;font-family:'Liberation Serif',serif;font-weight:bold;letter-spacing:-0.2px">AaBbCc</div><div class="t" style="left:0;width:100%;text-align:center;top:17.4px;font-size:5.6px;color:#2a4f8f">标题</div></div>
<div class="a" style="left:549.4px;top:64.4px;width:32.2px;height:25.4px;background:#fbfcfe;border:0.5px solid #dfe8f4;overflow:hidden"><div class="t" style="left:1.6px;top:3.29px;font-size:10.2px;color:#111;font-family:'Liberation Serif',serif;font-weight:bold;letter-spacing:-0.2px">AaBbCc</div><div class="t" style="left:0;width:100%;text-align:center;top:17.4px;font-size:5.6px;color:#2a4f8f">副标题</div></div>
<div class="a" style="left:582.4px;top:64.4px;width:32.2px;height:25.4px;background:#fbfcfe;border:0.5px solid #dfe8f4;overflow:hidden"><div class="t" style="left:1.6px;top:5.81px;font-size:5.7px;color:#9a9a9a;font-family:'Liberation Sans',sans-serif;font-style:italic;letter-spacing:-0.25px">AaBbCcDd.</div><div class="t" style="left:0;width:100%;text-align:center;top:17.4px;font-size:5.6px;color:#2a4f8f">不明显强调</div></div>
<div class="a" style="left:615.4px;top:64.4px;width:32.2px;height:25.4px;background:#fbfcfe;border:0.5px solid #dfe8f4;overflow:hidden"><div class="t" style="left:1.6px;top:5.81px;font-size:5.7px;color:#333;font-family:'Liberation Sans',sans-serif;font-style:italic;font-weight:bold;letter-spacing:-0.3px">AaBbCcDd.</div><div class="t" style="left:0;width:100%;text-align:center;top:17.4px;font-size:5.6px;color:#2a4f8f">强调</div></div>
<div class="a" style="left:648.4px;top:64.4px;width:32.2px;height:25.4px;background:#fbfcfe;border:0.5px solid #dfe8f4;overflow:hidden"><div class="t" style="left:1.6px;top:5.81px;font-size:5.7px;color:#4f81bd;font-family:'Liberation Sans',sans-serif;font-style:italic;font-weight:bold;letter-spacing:-0.3px">AaBbCcDd</div><div class="t" style="left:0;width:100%;text-align:center;top:17.4px;font-size:5.6px;color:#2a4f8f">明显强调</div></div>
<div class="a" style="left:681.4px;top:64.4px;width:32.2px;height:25.4px;background:#fbfcfe;border:0.5px solid #dfe8f4;overflow:hidden"><div class="t" style="left:1.6px;top:5.75px;font-size:5.8px;color:#111;font-family:'Liberation Sans',sans-serif;font-weight:bold;letter-spacing:-0.3px">AaBbCcDd</div><div class="t" style="left:0;width:100%;text-align:center;top:17.4px;font-size:5.6px;color:#2a4f8f">要点</div></div>
<div class="a" style="left:714.4px;top:64.4px;width:6.4px;height:8.3px;border:0.5px solid #b4c8e4;background:linear-gradient(#e6eef9,#cfdef2)"></div>
<div class="a" style="left:714.4px;top:72.9px;width:6.4px;height:8.3px;border:0.5px solid #b4c8e4;background:linear-gradient(#e6eef9,#cfdef2)"></div>
<div class="a" style="left:714.4px;top:81.4px;width:6.4px;height:8.3px;border:0.5px solid #b4c8e4;background:linear-gradient(#e6eef9,#cfdef2)"></div>
<svg class="a" style="left:716.1px;top:67.4px" width="3" height="2" viewBox="0 0 3 2"><path d="M0 1.8h3L1.5 0z" fill="#8a9ab8"/></svg>
<svg class="a" style="left:716.4px;top:76.2px" width="2.4" height="1.6" viewBox="0 0 2.4 1.6"><path d="M0 0h2.4L1.2 1.4z" fill="#6a7890" opacity=".8"/></svg>
<svg class="a" style="left:716.1px;top:84.2px" width="3" height="3.4" viewBox="0 0 3 3.4"><path d="M0 0.3h3" stroke="#6a7890" stroke-width=".6"/><path d="M0 1.4h3L1.5 3.2z" fill="#6a7890"/></svg>
<div class="t" style="left:726.4px;top:61.2px;font-size:13.6px;color:#d060c0;font-family:'Liberation Serif',serif;font-weight:bold;opacity:.85">A</div>
<div class="t" style="left:731.8px;top:63.2px;font-size:14.4px;color:#4a86d8;font-family:'Liberation Serif',serif;font-weight:bold;opacity:.9">A</div>
<div class="t" style="left:722.6px;top:79.8px;font-size:5.6px;color:#1f4a8f;">更改样式</div>
<svg class="a" style="left:732.4px;top:89.0px" width="2.4" height="1.6" viewBox="0 0 2.4 1.6"><path d="M0 0h2.4L1.2 1.4z" fill="#5a6a85" opacity=".8"/></svg>
<svg class="a" style="left:750.6px;top:63.6px" width="7" height="6.4" viewBox="0 0 7 6.4"><circle cx="1.8" cy="4.4" r="1.5" fill="#3a5aa8"/><circle cx="5.2" cy="4.4" r="1.5" fill="#3a5aa8"/><rect x="1" y="0.6" width="1.6" height="3.6" fill="#4a6ab8"/><rect x="4.4" y="0.6" width="1.6" height="3.6" fill="#4a6ab8"/><rect x="2.6" y="2.4" width="1.8" height="1.4" fill="#3a5aa8"/></svg>
<div class="t" style="left:758.8px;top:64.2px;font-size:5.6px;color:#1f4a8f;">查找</div>
<svg class="a" style="left:771.4px;top:65.4px" width="2.4" height="1.6" viewBox="0 0 2.4 1.6"><path d="M0 0h2.4L1.2 1.4z" fill="#5a6a85" opacity=".8"/></svg>
<svg class="a" style="left:750.6px;top:72.4px" width="7" height="6.6" viewBox="0 0 7 6.6"><text x="0" y="3.8" font-size="4" font-family="Liberation Sans,sans-serif" fill="#333" font-weight="bold">ab</text><rect x="2.6" y="4" width="4.2" height="2.2" fill="#48a848"/></svg>
<div class="t" style="left:758.8px;top:73px;font-size:5.6px;color:#1f4a8f;">替换</div>
<svg class="a" style="left:751px;top:82px" width="5.6" height="7" viewBox="0 0 5.6 7"><path d="M0.6 0.4v5.4l1.4-1.2 1 2.2.9-.4-1-2.2h1.8z" fill="#fff" stroke="#6a7890" stroke-width=".5"/></svg>
<div class="t" style="left:758.8px;top:82.6px;font-size:5.6px;color:#1f4a8f;">选择</div>
<svg class="a" style="left:771.4px;top:83.8px" width="2.4" height="1.6" viewBox="0 0 2.4 1.6"><path d="M0 0h2.4L1.2 1.4z" fill="#5a6a85" opacity=".8"/></svg>
<div class="a" style="left:141.4px;top:108px;width:529.6px;height:6.8px;background:#bccfeb"></div>
<div class="a" style="left:221px;top:108px;width:369px;height:6.8px;background:#fdfdfe"></div>
<svg class="a" style="left:141.4px;top:108px" width="529.6" height="7" font-size="4.1" font-family="Liberation Sans,sans-serif" fill="#5f6f8e"><text x="4.4" y="5.1" text-anchor="middle">8</text><rect x="8.9" y="2.7" width="0.6" height="1.6" fill="#8796b3"/><text x="13.7" y="5.1" text-anchor="middle">7</text><rect x="18.2" y="2.7" width="0.6" height="1.6" fill="#8796b3"/><text x="23.1" y="5.1" text-anchor="middle">6</text><rect x="27.5" y="2.7" width="0.6" height="1.6" fill="#8796b3"/><text x="32.4" y="5.1" text-anchor="middle">5</text><rect x="36.9" y="2.7" width="0.6" height="1.6" fill="#8796b3"/><text x="41.8" y="5.1" text-anchor="middle">4</text><rect x="46.2" y="2.7" width="0.6" height="1.6" fill="#8796b3"/><text x="51.2" y="5.1" text-anchor="middle">3</text><rect x="55.6" y="2.7" width="0.6" height="1.6" fill="#8796b3"/><text x="60.5" y="5.1" text-anchor="middle">2</text><rect x="65.0" y="2.7" width="0.6" height="1.6" fill="#8796b3"/><text x="69.8" y="5.1" text-anchor="middle">1</text><rect x="74.3" y="2.7" width="0.6" height="1.6" fill="#8796b3"/><text x="88.5" y="5.1" text-anchor="middle">1</text><rect x="93.0" y="2.7" width="0.6" height="1.6" fill="#8796b3"/><text x="97.9" y="5.1" text-anchor="middle">2</text><rect x="102.3" y="2.7" width="0.6" height="1.6" fill="#8796b3"/><text x="107.2" y="5.1" text-anchor="middle">3</text><rect x="111.7" y="2.7" width="0.6" height="1.6" fill="#8796b3"/><text x="116.6" y="5.1" text-anchor="middle">4</text><rect x="121.0" y="2.7" width="0.6" height="1.6" fill="#8796b3"/><text x="126.0" y="5.1" text-anchor="middle">5</text><rect x="130.4" y="2.7" width="0.6" height="1.6" fill="#8796b3"/><text x="135.3" y="5.1" text-anchor="middle">6</text><rect x="139.7" y="2.7" width="0.6" height="1.6" fill="#8796b3"/><text x="144.7" y="5.1" text-anchor="middle">7</text><rect x="149.1" y="2.7" width="0.6" height="1.6" fill="#8796b3"/><text x="154.0" y="5.1" text-anchor="middle">8</text><rect x="158.4" y="2.7" width="0.6" height="1.6" fill="#8796b3"/><text x="163.3" y="5.1" text-anchor="middle">9</text><rect x="167.8" y="2.7" width="0.6" height="1.6" fill="#8796b3"/><text x="172.7" y="5.1" text-anchor="middle">10</text><rect x="177.2" y="2.7" width="0.6" height="1.6" fill="#8796b3"/><text x="182.0" y="5.1" text-anchor="middle">11</text><rect x="186.5" y="2.7" width="0.6" height="1.6" fill="#8796b3"/><text x="191.4" y="5.1" text-anchor="middle">12</text><rect x="195.8" y="2.7" width="0.6" height="1.6" fill="#8796b3"/><text x="200.7" y="5.1" text-anchor="middle">13</text><rect x="205.2" y="2.7" width="0.6" height="1.6" fill="#8796b3"/><text x="210.1" y="5.1" text-anchor="middle">14</text><rect x="214.5" y="2.7" width="0.6" height="1.6" fill="#8796b3"/><text x="219.5" y="5.1" text-anchor="middle">15</text><rect x="223.9" y="2.7" width="0.6" height="1.6" fill="#8796b3"/><text x="228.8" y="5.1" text-anchor="middle">16</text><rect x="233.2" y="2.7" width="0.6" height="1.6" fill="#8796b3"/><text x="238.1" y="5.1" text-anchor="middle">17</text><rect x="242.6" y="2.7" width="0.6" height="1.6" fill="#8796b3"/><text x="247.5" y="5.1" text-anchor="middle">18</text><rect x="251.9" y="2.7" width="0.6" height="1.6" fill="#8796b3"/><text x="256.9" y="5.1" text-anchor="middle">19</text><rect x="261.3" y="2.7" width="0.6" height="1.6" fill="#8796b3"/><text x="266.2" y="5.1" text-anchor="middle">20</text><rect x="270.7" y="2.7" width="0.6" height="1.6" fill="#8796b3"/><text x="275.5" y="5.1" text-anchor="middle">21</text><rect x="280.0" y="2.7" width="0.6" height="1.6" fill="#8796b3"/><text x="284.9" y="5.1" text-anchor="middle">22</text><rect x="289.3" y="2.7" width="0.6" height="1.6" fill="#8796b3"/><text x="294.2" y="5.1" text-anchor="middle">23</text><rect x="298.7" y="2.7" width="0.6" height="1.6" fill="#8796b3"/><text x="303.6" y="5.1" text-anchor="middle">24</text><rect x="308.1" y="2.7" width="0.6" height="1.6" fill="#8796b3"/><text x="313.0" y="5.1" text-anchor="middle">25</text><rect x="317.4" y="2.7" width="0.6" height="1.6" fill="#8796b3"/><text x="322.3" y="5.1" text-anchor="middle">26</text><rect x="326.7" y="2.7" width="0.6" height="1.6" fill="#8796b3"/><text x="331.6" y="5.1" text-anchor="middle">27</text><rect x="336.1" y="2.7" width="0.6" height="1.6" fill="#8796b3"/><text x="341.0" y="5.1" text-anchor="middle">28</text><rect x="345.4" y="2.7" width="0.6" height="1.6" fill="#8796b3"/><text x="350.4" y="5.1" text-anchor="middle">29</text><rect x="354.8" y="2.7" width="0.6" height="1.6" fill="#8796b3"/><text x="359.7" y="5.1" text-anchor="middle">30</text><rect x="364.2" y="2.7" width="0.6" height="1.6" fill="#8796b3"/><text x="369.0" y="5.1" text-anchor="middle">31</text><rect x="373.5" y="2.7" width="0.6" height="1.6" fill="#8796b3"/><text x="378.4" y="5.1" text-anchor="middle">32</text><rect x="382.8" y="2.7" width="0.6" height="1.6" fill="#8796b3"/><text x="387.8" y="5.1" text-anchor="middle">33</text><rect x="392.2" y="2.7" width="0.6" height="1.6" fill="#8796b3"/><text x="397.1" y="5.1" text-anchor="middle">34</text><rect x="401.6" y="2.7" width="0.6" height="1.6" fill="#8796b3"/><text x="406.5" y="5.1" text-anchor="middle">35</text><rect x="410.9" y="2.7" width="0.6" height="1.6" fill="#8796b3"/><text x="415.8" y="5.1" text-anchor="middle">36</text><rect x="420.2" y="2.7" width="0.6" height="1.6" fill="#8796b3"/><text x="425.1" y="5.1" text-anchor="middle">37</text><rect x="429.6" y="2.7" width="0.6" height="1.6" fill="#8796b3"/><text x="434.5" y="5.1" text-anchor="middle">38</text><rect x="438.9" y="2.7" width="0.6" height="1.6" fill="#8796b3"/><text x="443.9" y="5.1" text-anchor="middle">39</text><rect x="448.3" y="2.7" width="0.6" height="1.6" fill="#8796b3"/><text x="453.2" y="5.1" text-anchor="middle">40</text><rect x="457.7" y="2.7" width="0.6" height="1.6" fill="#8796b3"/><text x="462.5" y="5.1" text-anchor="middle">41</text><rect x="467.0" y="2.7" width="0.6" height="1.6" fill="#8796b3"/><text x="471.9" y="5.1" text-anchor="middle">42</text><rect x="476.3" y="2.7" width="0.6" height="1.6" fill="#8796b3"/><text x="481.2" y="5.1" text-anchor="middle">43</text><rect x="485.7" y="2.7" width="0.6" height="1.6" fill="#8796b3"/><text x="490.6" y="5.1" text-anchor="middle">44</text><rect x="495.1" y="2.7" width="0.6" height="1.6" fill="#8796b3"/><text x="500.0" y="5.1" text-anchor="middle">45</text><rect x="504.4" y="2.7" width="0.6" height="1.6" fill="#8796b3"/><text x="509.3" y="5.1" text-anchor="middle">46</text><rect x="513.8" y="2.7" width="0.6" height="1.6" fill="#8796b3"/><text x="518.6" y="5.1" text-anchor="middle">47</text><rect x="523.1" y="2.7" width="0.6" height="1.6" fill="#8796b3"/></svg>
<svg class="a" style="left:218.6px;top:107.6px" width="5" height="7.6" viewBox="0 0 5 7.6"><path d="M0.6 0.3h3.6v1.6L2.4 3.4 0.6 1.9z" fill="#eef2f8" stroke="#7a8aa8" stroke-width=".4"/><path d="M0.6 7.3h3.6V5.7L2.4 4.2 0.6 5.7z" fill="#eef2f8" stroke="#7a8aa8" stroke-width=".4"/></svg>
<svg class="a" style="left:587.6px;top:111px" width="5" height="4" viewBox="0 0 5 4"><path d="M0.6 3.7h3.6V2.1L2.4 0.6 0.6 2.1z" fill="#eef2f8" stroke="#7a8aa8" stroke-width=".4"/></svg>
<div class="a" style="left:1.9px;top:108px;width:6.2px;height:6.4px;background:#e9f0fa;border:0.5px solid #9db5d8"></div>
<svg class="a" style="left:3.6px;top:109.6px" width="3" height="3.4" viewBox="0 0 3 3.4"><path d="M0.5 0.2v2.6h2.2" stroke="#4a5878" stroke-width=".7" fill="none"/></svg>
<div class="a" style="left:1.9px;top:115.8px;width:6.2px;height:347px;background:#fbfcfe"></div>
<svg class="a" style="left:1.9px;top:115.8px" width="6.2" height="347" font-size="4.1" font-family="Liberation Sans,sans-serif" fill="#6f7f9e"><text transform="translate(4.6 6.2) rotate(-90)" text-anchor="middle">2</text><rect x="2.4" y="12.8" width="1.6" height="0.6" fill="#8796b3"/><text transform="translate(4.6 20.0) rotate(-90)" text-anchor="middle">3</text><rect x="2.4" y="26.6" width="1.6" height="0.6" fill="#8796b3"/><text transform="translate(4.6 33.7) rotate(-90)" text-anchor="middle">4</text><rect x="2.4" y="40.3" width="1.6" height="0.6" fill="#8796b3"/><text transform="translate(4.6 47.5) rotate(-90)" text-anchor="middle">5</text><rect x="2.4" y="54.1" width="1.6" height="0.6" fill="#8796b3"/><text transform="translate(4.6 61.2) rotate(-90)" text-anchor="middle">6</text><rect x="2.4" y="67.8" width="1.6" height="0.6" fill="#8796b3"/><text transform="translate(4.6 75.0) rotate(-90)" text-anchor="middle">7</text><rect x="2.4" y="81.5" width="1.6" height="0.6" fill="#8796b3"/><text transform="translate(4.6 88.7) rotate(-90)" text-anchor="middle">8</text><rect x="2.4" y="95.3" width="1.6" height="0.6" fill="#8796b3"/><text transform="translate(4.6 102.5) rotate(-90)" text-anchor="middle">9</text><rect x="2.4" y="109.0" width="1.6" height="0.6" fill="#8796b3"/><text transform="translate(4.6 116.2) rotate(-90)" text-anchor="middle">10</text><rect x="2.4" y="122.8" width="1.6" height="0.6" fill="#8796b3"/><text transform="translate(4.6 129.9) rotate(-90)" text-anchor="middle">11</text><rect x="2.4" y="136.5" width="1.6" height="0.6" fill="#8796b3"/><text transform="translate(4.6 143.7) rotate(-90)" text-anchor="middle">12</text><rect x="2.4" y="150.3" width="1.6" height="0.6" fill="#8796b3"/><text transform="translate(4.6 157.4) rotate(-90)" text-anchor="middle">13</text><rect x="2.4" y="164.0" width="1.6" height="0.6" fill="#8796b3"/><text transform="translate(4.6 171.2) rotate(-90)" text-anchor="middle">14</text><rect x="2.4" y="177.8" width="1.6" height="0.6" fill="#8796b3"/><text transform="translate(4.6 184.9) rotate(-90)" text-anchor="middle">15</text><rect x="2.4" y="191.5" width="1.6" height="0.6" fill="#8796b3"/><text transform="translate(4.6 198.7) rotate(-90)" text-anchor="middle">16</text><rect x="2.4" y="205.3" width="1.6" height="0.6" fill="#8796b3"/><text transform="translate(4.6 212.4) rotate(-90)" text-anchor="middle">17</text><rect x="2.4" y="219.0" width="1.6" height="0.6" fill="#8796b3"/><text transform="translate(4.6 226.2) rotate(-90)" text-anchor="middle">18</text><rect x="2.4" y="232.8" width="1.6" height="0.6" fill="#8796b3"/><text transform="translate(4.6 239.9) rotate(-90)" text-anchor="middle">19</text><rect x="2.4" y="246.5" width="1.6" height="0.6" fill="#8796b3"/><text transform="translate(4.6 253.7) rotate(-90)" text-anchor="middle">20</text><rect x="2.4" y="260.3" width="1.6" height="0.6" fill="#8796b3"/><text transform="translate(4.6 267.4) rotate(-90)" text-anchor="middle">21</text><rect x="2.4" y="274.1" width="1.6" height="0.6" fill="#8796b3"/><text transform="translate(4.6 281.2) rotate(-90)" text-anchor="middle">22</text><rect x="2.4" y="287.8" width="1.6" height="0.6" fill="#8796b3"/><text transform="translate(4.6 294.9) rotate(-90)" text-anchor="middle">23</text><rect x="2.4" y="301.6" width="1.6" height="0.6" fill="#8796b3"/><text transform="translate(4.6 308.7) rotate(-90)" text-anchor="middle">24</text><rect x="2.4" y="315.3" width="1.6" height="0.6" fill="#8796b3"/><text transform="translate(4.6 322.4) rotate(-90)" text-anchor="middle">25</text><rect x="2.4" y="329.1" width="1.6" height="0.6" fill="#8796b3"/><text transform="translate(4.6 336.2) rotate(-90)" text-anchor="middle">26</text><rect x="2.4" y="342.8" width="1.6" height="0.6" fill="#8796b3"/></svg>
<svg class="a" style="left:8.1px;top:105px" width="134" height="60" viewBox="0 0 134 60"><defs><linearGradient id="sw" x1="0" y1="0" x2="1" y2="0"><stop offset="0" stop-color="#fff" stop-opacity=".2"/><stop offset="1" stop-color="#fff" stop-opacity=".28"/></linearGradient></defs><path d="M0 10.7H86C52 15.5 22 26 0 37.4z" fill="url(#sw)"/></svg>
<div class="a" style="left:671px;top:115.8px;width:1px;height:347px;background:#4a5f88"></div>
<div class="a" style="left:803.4px;top:105px;width:7.6px;height:359px;background:linear-gradient(to right,rgba(255,255,255,.06),rgba(255,255,255,.16) 50%,rgba(255,255,255,.06))"></div>
<div class="a" style="left:803.4px;top:116.5px;width:7.6px;height:27.5px;background:rgba(70,110,185,.42)"></div>
<div class="a" style="left:804.4px;top:106.6px;width:6.2px;height:9.2px;background:#e4edf9;border:0.5px solid #8aa4cc;border-radius:1px"></div>
<svg class="a" style="left:805.4px;top:108px" width="4.2" height="6.4" viewBox="0 0 4.2 6.4"><rect x="0.6" y="0.6" width="3" height="3.6" fill="#fff" stroke="#6a7a98" stroke-width=".5"/><path d="M0.4 5.4h3.4" stroke="#6a7a98" stroke-width=".6"/></svg>
<svg class="a" style="left:805.8px;top:119.4px" width="3.4" height="2.4" viewBox="0 0 3.4 2.4"><path d="M0 2.2h3.4L1.7 0z" fill="#3a4f7a"/></svg>
<div class="a" style="left:803.8px;top:144px;width:6.8px;height:69.4px;background:linear-gradient(to right,#e9f0fa,#d6e2f4);border:0.4px solid #b4c6e4;border-radius:1px"></div>
<svg class="a" style="left:806px;top:176.4px" width="3" height="4" viewBox="0 0 3 4"><path d="M0 0.5h3M0 1.9h3M0 3.3h3" stroke="#8a9cc0" stroke-width=".5"/></svg>
<svg class="a" style="left:805.8px;top:437.4px" width="3.4" height="2.4" viewBox="0 0 3.4 2.4"><path d="M0 0h3.4L1.7 2.2z" fill="#4a5f8a"/></svg>
<svg class="a" style="left:805.4px;top:444.4px" width="4.2" height="4.2" viewBox="0 0 4.2 4.2"><path d="M0.2 2.2l1.9-1.8 1.9 1.8M0.2 4l1.9-1.8 1.9 1.8" stroke="#3a4f80" stroke-width=".7" fill="none"/></svg>
<div class="a" style="left:805.4px;top:450.6px;width:4px;height:4px;border-radius:50%;background:#dfe8f6;border:0.6px solid #5a6f98"></div>
<svg class="a" style="left:805.4px;top:457px" width="4.2" height="4.2" viewBox="0 0 4.2 4.2"><path d="M0.2 0.2l1.9 1.8 1.9-1.8M0.2 2l1.9 1.8 1.9-1.8" stroke="#3a4f80" stroke-width=".7" fill="none"/></svg>
<div class="a" style="left:0;top:105px;width:804px;height:358.4px;overflow:hidden"><div class="a" style="left:0;top:-105px;width:804px;height:600px"><div class="a" style="left:183.6px;top:136px;width:444.7px;height:21.3px;background:#f1f1f1"></div><div class="a" style="left:183.6px;top:135.55px;width:445.6px;height:0.9px;background:#8a8a8a"></div><div class="a" style="left:183.6px;top:156.85px;width:445.6px;height:0.9px;background:#8a8a8a"></div><div class="a" style="left:183.6px;top:198.55px;width:445.6px;height:0.9px;background:#8a8a8a"></div><div class="a" style="left:183.6px;top:219.55px;width:445.6px;height:0.9px;background:#8a8a8a"></div><div class="a" style="left:183.6px;top:247.15px;width:445.6px;height:0.9px;background:#8a8a8a"></div><div class="a" style="left:183.6px;top:302.55px;width:445.6px;height:0.9px;background:#8a8a8a"></div><div class="a" style="left:183.6px;top:374.25px;width:445.6px;height:0.9px;background:#8a8a8a"></div><div class="a" style="left:405.7px;top:345.55px;width:222.6px;height:0.9px;background:#8a8a8a"></div><div class="a" style="left:183.15px;top:136px;width:0.9px;height:327px;background:#8a8a8a"></div><div class="a" style="left:215.85px;top:136px;width:0.9px;height:327px;background:#8a8a8a"></div><div class="a" style="left:405.25px;top:136px;width:0.9px;height:327px;background:#8a8a8a"></div><div class="a" style="left:554.85px;top:136px;width:0.9px;height:327px;background:#8a8a8a"></div><div class="a" style="left:627.85px;top:136px;width:0.9px;height:327px;background:#8a8a8a"></div><div class="t serif" style="left:183.6px;width:32.7px;top:142.90px;text-align:center;font-size:9.2px;color:#3c3c3c;font-weight:300;font-weight:600;letter-spacing:0.5px;color:#333">序号<span style="display:inline-block;width:0;font-size:4.4px;color:#999;letter-spacing:0;font-weight:normal;font-style:normal;font-family:'Liberation Sans',sans-serif;vertical-align:-1px">↵</span></div><div class="t serif" style="left:216.3px;width:189.4px;top:142.90px;text-align:center;font-size:9.2px;color:#3c3c3c;font-weight:300;font-weight:600;letter-spacing:0.5px;color:#333">材料名称<span style="display:inline-block;width:0;font-size:4.4px;color:#999;letter-spacing:0;font-weight:normal;font-style:normal;font-family:'Liberation Sans',sans-serif;vertical-align:-1px">↵</span></div><div class="t serif" style="left:405.7px;width:149.6px;top:142.90px;text-align:center;font-size:9.2px;color:#3c3c3c;font-weight:300;font-weight:600;letter-spacing:0.5px;color:#333">主要内容和基本要求<span style="display:inline-block;width:0;font-size:4.4px;color:#999;letter-spacing:0;font-weight:normal;font-style:normal;font-family:'Liberation Sans',sans-serif;vertical-align:-1px">↵</span></div><div class="t serif" style="left:555.3px;width:73.0px;top:142.90px;text-align:center;font-size:9.2px;color:#3c3c3c;font-weight:300;font-weight:600;letter-spacing:0.5px;color:#333">责任单位<span style="display:inline-block;width:0;font-size:4.4px;color:#999;letter-spacing:0;font-weight:normal;font-style:normal;font-family:'Liberation Sans',sans-serif;vertical-align:-1px">↵</span></div><div class="t serif" style="left:183.6px;width:32.7px;top:175.00px;text-align:center;font-size:8.6px;color:#3c3c3c;font-weight:300;">1.<span style="display:inline-block;width:0;font-size:4.4px;color:#999;letter-spacing:0;font-weight:normal;font-style:normal;font-family:'Liberation Sans',sans-serif;vertical-align:-1px">↵</span></div><div class="t serif" style="left:183.6px;width:32.7px;top:206.20px;text-align:center;font-size:8.6px;color:#3c3c3c;font-weight:300;">2.<span style="display:inline-block;width:0;font-size:4.4px;color:#999;letter-spacing:0;font-weight:normal;font-style:normal;font-family:'Liberation Sans',sans-serif;vertical-align:-1px">↵</span></div><div class="t serif" style="left:183.6px;width:32.7px;top:230.40px;text-align:center;font-size:8.6px;color:#3c3c3c;font-weight:300;">3.<span style="display:inline-block;width:0;font-size:4.4px;color:#999;letter-spacing:0;font-weight:normal;font-style:normal;font-family:'Liberation Sans',sans-serif;vertical-align:-1px">↵</span></div><div class="t serif" style="left:183.6px;width:32.7px;top:272.00px;text-align:center;font-size:8.6px;color:#3c3c3c;font-weight:300;">4.<span style="display:inline-block;width:0;font-size:4.4px;color:#999;letter-spacing:0;font-weight:normal;font-style:normal;font-family:'Liberation Sans',sans-serif;vertical-align:-1px">↵</span></div><div class="t serif" style="left:183.6px;width:32.7px;top:335.40px;text-align:center;font-size:8.6px;color:#3c3c3c;font-weight:300;">5.<span style="display:inline-block;width:0;font-size:4.4px;color:#999;letter-spacing:0;font-weight:normal;font-style:normal;font-family:'Liberation Sans',sans-serif;vertical-align:-1px">↵</span></div><div class="t serif" style="left:183.6px;width:32.7px;top:426.80px;text-align:center;font-size:8.6px;color:#3c3c3c;font-weight:300;">6.<span style="display:inline-block;width:0;font-size:4.4px;color:#999;letter-spacing:0;font-weight:normal;font-style:normal;font-family:'Liberation Sans',sans-serif;vertical-align:-1px">↵</span></div><div class="t serif" style="left:221.8px;top:163.53px;font-size:9.15px;color:#3c3c3c;font-weight:300;letter-spacing:0.242px">学校、学院领导班子及分工，学校党政、行</div><div class="t serif" style="left:221.8px;top:185.32px;font-size:9.15px;color:#3c3c3c;font-weight:300;">政、直属单位及主要负责人名册<span style="display:inline-block;width:0;font-size:4.4px;color:#999;letter-spacing:0;font-weight:normal;font-style:normal;font-family:'Liberation Sans',sans-serif;vertical-align:-1px">↵</span></div><div class="t serif" style="left:221.8px;top:205.93px;font-size:9.15px;color:#3c3c3c;font-weight:300;">近三学年学校本科教学质量报告<span style="display:inline-block;width:0;font-size:4.4px;color:#999;letter-spacing:0;font-weight:normal;font-style:normal;font-family:'Liberation Sans',sans-serif;vertical-align:-1px">↵</span></div><div class="t serif" style="left:221.8px;top:230.12px;font-size:9.15px;color:#3c3c3c;font-weight:300;">近三学年学校基本教学状态数据分析报告<span style="display:inline-block;width:0;font-size:4.4px;color:#999;letter-spacing:0;font-weight:normal;font-style:normal;font-family:'Liberation Sans',sans-serif;vertical-align:-1px">↵</span></div><div class="t serif" style="left:221.8px;top:271.93px;font-size:9.15px;color:#3c3c3c;font-weight:300;">参评学院在校学生名单<span style="display:inline-block;width:0;font-size:4.4px;color:#999;letter-spacing:0;font-weight:normal;font-style:normal;font-family:'Liberation Sans',sans-serif;vertical-align:-1px">↵</span></div><div class="t serif" style="left:221.8px;top:335.12px;font-size:9.15px;color:#3c3c3c;font-weight:300;">参评学院自有专任教师名单<span style="display:inline-block;width:0;font-size:4.4px;color:#999;letter-spacing:0;font-weight:normal;font-style:normal;font-family:'Liberation Sans',sans-serif;vertical-align:-1px">↵</span></div><div class="t serif" style="left:221.8px;top:426.73px;font-size:9.15px;color:#3c3c3c;font-weight:300;">参评学院外聘教师名单<span style="display:inline-block;width:0;font-size:4.4px;color:#999;letter-spacing:0;font-weight:normal;font-style:normal;font-family:'Liberation Sans',sans-serif;vertical-align:-1px">↵</span></div><div class="t" style="left:411px;top:178.8px;font-size:4.6px"><span style="display:inline-block;width:0;font-size:4.4px;color:#999;letter-spacing:0;font-weight:normal;font-style:normal;font-family:'Liberation Sans',sans-serif;vertical-align:-1px">↵</span></div><div class="t" style="left:411px;top:209.8px;font-size:4.6px"><span style="display:inline-block;width:0;font-size:4.4px;color:#999;letter-spacing:0;font-weight:normal;font-style:normal;font-family:'Liberation Sans',sans-serif;vertical-align:-1px">↵</span></div><div class="t serif" style="left:411px;top:230.20px;font-size:9.0px;color:#3c3c3c;font-weight:300;letter-spacing:0.000px">需由国家教学质量监测平台导出<span style="display:inline-block;width:0;font-size:4.4px;color:#999;letter-spacing:0;font-weight:normal;font-style:normal;font-family:'Liberation Sans',sans-serif;vertical-align:-1px">↵</span></div><div class="t serif" style="left:411px;top:251.35px;font-size:9.1px;color:#3c3c3c;font-weight:300;letter-spacing:0.05px"><span style="display:inline-block;width:14px">1.</span>须与学<u style="text-decoration-color:#3a9a3a;text-decoration-thickness:0.6px">信网数据</u>保持一致 。<span style="display:inline-block;width:0;font-size:4.4px;color:#999;letter-spacing:0;font-weight:normal;font-style:normal;font-family:'Liberation Sans',sans-serif;vertical-align:-1px">↵</span></div><div class="t serif" style="left:411px;top:265.60px;font-size:9.0px;color:#3c3c3c;font-weight:300;letter-spacing:0.56px"><span style="display:inline-block;width:15px;letter-spacing:0">2.</span>包括学生类别、学号、姓名、</div><div class="t serif" style="left:411px;top:279.20px;font-size:9.0px;color:#3c3c3c;font-weight:300;letter-spacing:0.314px">性别、出生年月、入学年份、所在</div><div class="t serif" style="left:411px;top:292.80px;font-size:9.0px;color:#3c3c3c;font-weight:300;letter-spacing:0.000px">学院、专业、年级、班级等。<span style="display:inline-block;width:0;font-size:4.4px;color:#999;letter-spacing:0;font-weight:normal;font-style:normal;font-family:'Liberation Sans',sans-serif;vertical-align:-1px">↵</span></div><div class="t serif" style="left:411px;top:307.40px;font-size:9.0px;color:#3c3c3c;font-weight:300;letter-spacing:0.000px">包括工号、姓名、性别、出生年月、</div><div class="t serif" style="left:411px;top:321.20px;font-size:9.0px;color:#3c3c3c;font-weight:300;letter-spacing:0.314px">入职时间、教学单位、学历学位、</div><div class="t serif" style="left:411px;top:334.80px;font-size:9.0px;color:#3c3c3c;font-weight:300;letter-spacing:0.000px">职称、社保编号。。<span style="display:inline-block;width:0;font-size:4.4px;color:#999;letter-spacing:0;font-weight:normal;font-style:normal;font-family:'Liberation Sans',sans-serif;vertical-align:-1px">↵</span></div><div class="t serif" style="left:411px;top:350.60px;font-size:9.0px;color:#3c3c3c;font-weight:300;letter-spacing:0.275px">近 3 个学期主要教学内容及工作量</div><div class="t serif" style="left:411px;top:364.20px;font-size:9.0px;color:#3c3c3c;font-weight:300;letter-spacing:0.000px">等。。<span style="display:inline-block;width:0;font-size:4.4px;color:#999;letter-spacing:0;font-weight:normal;font-style:normal;font-family:'Liberation Sans',sans-serif;vertical-align:-1px">↵</span></div><div class="t serif" style="left:411px;top:377.90px;font-size:9.0px;color:#3c3c3c;font-weight:300;letter-spacing:0.000px">包含工号、姓名、性别、出生年月、</div><div class="t serif" style="left:411px;top:391.68px;font-size:9.0px;color:#3c3c3c;font-weight:300;letter-spacing:0.314px">聘任时间、聘期、教学单位、承担</div><div class="t serif" style="left:411px;top:405.46px;font-size:9.0px;color:#3c3c3c;font-weight:300;letter-spacing:0.314px">主要教学任务类型、折合教师数等</div><div class="t serif" style="left:411px;top:419.24px;font-size:9.0px;color:#3c3c3c;font-weight:300;letter-spacing:0.275px">（民办学校外聘教师聘期 2 年及以</div><div class="t serif" style="left:411px;top:433.02px;font-size:9.0px;color:#3c3c3c;font-weight:300;letter-spacing:1.031px">上且达到与学校自有专任教师同</div><div class="t serif" style="left:411px;top:446.80px;font-size:9.0px;color:#3c3c3c;font-weight:300;letter-spacing:0.314px">等考核要求的最低工作量，折算教</div><div class="t serif" style="left:411px;top:460.58px;font-size:9.0px;color:#3c3c3c;font-weight:300;letter-spacing:0.443px">师数方可记为 1，其他情形仅可记</div><div class="t serif" style="left:555.3px;width:73.0px;top:175.50px;text-align:center;font-size:7.6px;color:#3c3c3c;font-weight:300;font-weight:bold;font-style:italic;letter-spacing:1.7px;font-family:'Liberation Serif','Noto Serif CJK SC',serif">校办公室<span style="display:inline-block;width:0;font-size:4.4px;color:#999;letter-spacing:0;font-weight:normal;font-style:normal;font-family:'Liberation Sans',sans-serif;vertical-align:-1px">↵</span></div><div class="t serif" style="left:555.3px;width:73.0px;top:206.70px;text-align:center;font-size:7.6px;color:#3c3c3c;font-weight:300;font-weight:bold;font-style:italic;letter-spacing:1.7px;font-family:'Liberation Serif','Noto Serif CJK SC',serif">教务处<span style="display:inline-block;width:0;font-size:4.4px;color:#999;letter-spacing:0;font-weight:normal;font-style:normal;font-family:'Liberation Sans',sans-serif;vertical-align:-1px">↵</span></div><div class="t serif" style="left:555.3px;width:73.0px;top:223.90px;text-align:center;font-size:7.6px;color:#3c3c3c;font-weight:300;font-weight:bold;font-style:italic;letter-spacing:1.7px;font-family:'Liberation Serif','Noto Serif CJK SC',serif">规划发展与<span style="display:inline-block;width:0;font-size:4.4px;color:#999;letter-spacing:0;font-weight:normal;font-style:normal;font-family:'Liberation Sans',sans-serif;vertical-align:-1px">↵</span></div><div class="t serif" style="left:555.3px;width:73.0px;top:237.90px;text-align:center;font-size:7.6px;color:#3c3c3c;font-weight:300;font-weight:bold;font-style:italic;letter-spacing:1.7px;font-family:'Liberation Serif','Noto Serif CJK SC',serif">协调处<span style="display:inline-block;width:0;font-size:4.4px;color:#999;letter-spacing:0;font-weight:normal;font-style:normal;font-family:'Liberation Sans',sans-serif;vertical-align:-1px">↵</span></div><div class="t serif" style="left:555.3px;width:73.0px;top:272.70px;text-align:center;font-size:7.6px;color:#3c3c3c;font-weight:300;font-weight:bold;font-style:italic;letter-spacing:1.7px;font-family:'Liberation Serif','Noto Serif CJK SC',serif">教务处<span style="display:inline-block;width:0;font-size:4.4px;color:#999;letter-spacing:0;font-weight:normal;font-style:normal;font-family:'Liberation Sans',sans-serif;vertical-align:-1px">↵</span></div><div class="t serif" style="left:555.3px;width:73.0px;top:321.90px;text-align:center;font-size:7.6px;color:#3c3c3c;font-weight:300;font-weight:bold;font-style:italic;letter-spacing:1.7px;font-family:'Liberation Serif','Noto Serif CJK SC',serif">人力资源处<span style="display:inline-block;width:0;font-size:4.4px;color:#999;letter-spacing:0;font-weight:normal;font-style:normal;font-family:'Liberation Sans',sans-serif;vertical-align:-1px">↵</span></div><div class="t serif" style="left:555.3px;width:73.0px;top:357.30px;text-align:center;font-size:7.6px;color:#3c3c3c;font-weight:300;font-weight:bold;font-style:italic;letter-spacing:1.7px;font-family:'Liberation Serif','Noto Serif CJK SC',serif">教务处<span style="display:inline-block;width:0;font-size:4.4px;color:#999;letter-spacing:0;font-weight:normal;font-style:normal;font-family:'Liberation Sans',sans-serif;vertical-align:-1px">↵</span></div><div class="t serif" style="left:555.3px;width:73.0px;top:427.30px;text-align:center;font-size:7.6px;color:#3c3c3c;font-weight:300;font-weight:bold;font-style:italic;letter-spacing:1.7px;font-family:'Liberation Serif','Noto Serif CJK SC',serif">人力资源处<span style="display:inline-block;width:0;font-size:4.4px;color:#999;letter-spacing:0;font-weight:normal;font-style:normal;font-family:'Liberation Sans',sans-serif;vertical-align:-1px">↵</span></div><div class="t" style="left:629.8px;top:141.3px;font-size:4.6px"><span style="display:inline-block;width:0;font-size:4.4px;color:#999;letter-spacing:0;font-weight:normal;font-style:normal;font-family:'Liberation Sans',sans-serif;vertical-align:-1px">↵</span></div><div class="t" style="left:629.8px;top:173.8px;font-size:4.6px"><span style="display:inline-block;width:0;font-size:4.4px;color:#999;letter-spacing:0;font-weight:normal;font-style:normal;font-family:'Liberation Sans',sans-serif;vertical-align:-1px">↵</span></div><div class="t" style="left:629.8px;top:204.8px;font-size:4.6px"><span style="display:inline-block;width:0;font-size:4.4px;color:#999;letter-spacing:0;font-weight:normal;font-style:normal;font-family:'Liberation Sans',sans-serif;vertical-align:-1px">↵</span></div><div class="t" style="left:629.8px;top:228.8px;font-size:4.6px"><span style="display:inline-block;width:0;font-size:4.4px;color:#999;letter-spacing:0;font-weight:normal;font-style:normal;font-family:'Liberation Sans',sans-serif;vertical-align:-1px">↵</span></div><div class="t" style="left:629.8px;top:270.4px;font-size:4.6px"><span style="display:inline-block;width:0;font-size:4.4px;color:#999;letter-spacing:0;font-weight:normal;font-style:normal;font-family:'Liberation Sans',sans-serif;vertical-align:-1px">↵</span></div><div class="t" style="left:629.8px;top:306.3px;font-size:4.6px"><span style="display:inline-block;width:0;font-size:4.4px;color:#999;letter-spacing:0;font-weight:normal;font-style:normal;font-family:'Liberation Sans',sans-serif;vertical-align:-1px">↵</span></div><div class="t" style="left:629.8px;top:349.3px;font-size:4.6px"><span style="display:inline-block;width:0;font-size:4.4px;color:#999;letter-spacing:0;font-weight:normal;font-style:normal;font-family:'Liberation Sans',sans-serif;vertical-align:-1px">↵</span></div><div class="t" style="left:629.8px;top:378.8px;font-size:4.6px"><span style="display:inline-block;width:0;font-size:4.4px;color:#999;letter-spacing:0;font-weight:normal;font-style:normal;font-family:'Liberation Sans',sans-serif;vertical-align:-1px">↵</span></div><div class="t" style="left:221.5px;top:129.8px;font-size:4.6px"><span style="display:inline-block;width:0;font-size:4.4px;color:#999;letter-spacing:0;font-weight:normal;font-style:normal;font-family:'Liberation Sans',sans-serif;vertical-align:-1px">↵</span></div><div class="a" style="left:179.6px;top:131.8px;width:3.6px;height:3.6px;border:0.5px solid #a8b6d8;background:#e8eefa"></div></div></div>
<svg class="a" style="left:634.6px;top:211.6px" width="6.4" height="9.6" viewBox="0 0 6.4 9.6"><path d="M0.5 0.5v7.2l1.7-1.5 1.1 2.6 1-.45-1.1-2.5h2.4z" fill="#fff" stroke="#555" stroke-width=".5"/></svg>
<div class="a" style="left:0;top:463.6px;width:811px;height:11.2px;background:linear-gradient(to bottom,#e9f1fc 0%,#d3e3f8 30%,#c0d6f3 60%,#b4cdef 100%)"></div>
<div class="a" style="left:678.4px;top:464.4px;width:132.6px;height:10.4px;background:linear-gradient(to bottom,#cfe0f6 0%,#b3cdf0 50%,#a5c3ec 100%);border-left:0.6px solid #8fabd6"></div>
<div class="t" style="left:2.6px;top:466.6px;font-size:5.7px;color:#1f3f7a;">页数: 1/2</div>
<div class="t" style="left:33px;top:466.6px;font-size:5.7px;color:#1f3f7a;">字数: 880</div>
<svg class="a" style="left:62.6px;top:465.6px" width="9" height="8" viewBox="0 0 9 8"><path d="M0.6 1.2h5v5.4h-5z" fill="#f4f6fb" stroke="#7a8ab0" stroke-width=".5"/><path d="M4 4.6l1.6 1.8 2.8-4" stroke="#d83a2a" stroke-width="1" fill="none"/></svg>
<div class="t" style="left:76px;top:466.6px;font-size:5.7px;color:#1f3f7a;">中文(简体, 中国)</div>
<div class="t" style="left:125px;top:466.6px;font-size:5.7px;color:#1f3f7a;">插入</div>
<div class="a" style="left:29px;top:465.4px;width:0.6px;height:8.4px;background:#b9cfee"></div>
<div class="a" style="left:60px;top:465.4px;width:0.6px;height:8.4px;background:#b9cfee"></div>
<div class="a" style="left:73.4px;top:465.4px;width:0.6px;height:8.4px;background:#b9cfee"></div>
<div class="a" style="left:121.6px;top:465.4px;width:0.6px;height:8.4px;background:#b9cfee"></div>
<div class="a" style="left:139px;top:465.4px;width:0.6px;height:8.4px;background:#b9cfee"></div>
<div class="a" style="left:680.8px;top:465.4px;width:8.4px;height:8.2px;border:0.6px solid #e8a838;background:linear-gradient(#fde3a8,#f9c868)"></div>
<svg class="a" style="left:682.4px;top:466.6px" width="6" height="6" viewBox="0 0 6 6"><rect x="0.5" y="0.5" width="4.8" height="4.8" fill="#f6f8fc" stroke="#7f90b0" stroke-width=".5"/><path d="M1.4 2h3M1.4 3.2h3M1.4 4.4h2" stroke="#9aa8c4" stroke-width=".4"/></svg>
<svg class="a" style="left:691.0px;top:466.6px" width="6" height="6" viewBox="0 0 6 6"><rect x="0.5" y="0.5" width="4.8" height="4.8" fill="#f6f8fc" stroke="#7f90b0" stroke-width=".5"/><path d="M1.4 2h3M1.4 3.2h3M1.4 4.4h2" stroke="#9aa8c4" stroke-width=".4"/></svg>
<svg class="a" style="left:699.6px;top:466.6px" width="6" height="6" viewBox="0 0 6 6"><rect x="0.5" y="0.5" width="4.8" height="4.8" fill="#f6f8fc" stroke="#7f90b0" stroke-width=".5"/><path d="M1.4 2h3M1.4 3.2h3M1.4 4.4h2" stroke="#9aa8c4" stroke-width=".4"/></svg>
<svg class="a" style="left:708.2px;top:466.6px" width="6" height="6" viewBox="0 0 6 6"><rect x="0.5" y="0.5" width="4.8" height="4.8" fill="#f6f8fc" stroke="#7f90b0" stroke-width=".5"/><path d="M1.4 2h3M1.4 3.2h3M1.4 4.4h2" stroke="#9aa8c4" stroke-width=".4"/></svg>
<svg class="a" style="left:716.8000000000001px;top:466.6px" width="6" height="6" viewBox="0 0 6 6"><rect x="0.5" y="0.5" width="4.8" height="4.8" fill="#f6f8fc" stroke="#7f90b0" stroke-width=".5"/><path d="M1.4 2h3M1.4 3.2h3M1.4 4.4h2" stroke="#9aa8c4" stroke-width=".4"/></svg>
<div class="t" style="left:727.4px;top:466.7px;font-size:5.6px;color:#2f5496;">140%</div>
<div class="a" style="left:746px;top:466.2px;width:6.6px;height:6.6px;border-radius:50%;background:radial-gradient(circle at 50% 35%,#fff,#dbe6f6);border:0.5px solid #6f88b8"></div>
<svg class="a" style="left:747.6px;top:468.9px" width="3.4" height="1.2" viewBox="0 0 3.4 1.2"><path d="M0 0.6h3.4" stroke="#3a5488" stroke-width=".8"/></svg>
<div class="a" style="left:754px;top:469.2px;width:46px;height:0.6px;background:#9db6dc"></div>
<div class="a" style="left:776.8px;top:468px;width:0.6px;height:3px;background:#7f9bc8"></div>
<svg class="a" style="left:777px;top:465.8px" width="4" height="7.4" viewBox="0 0 4 7.4"><path d="M0.4 0.4h3.2v4.2L2 7 0.4 4.6z" fill="#e4ecf8" stroke="#6f88b8" stroke-width=".5"/></svg>
<div class="a" style="left:801.6px;top:466.2px;width:6.6px;height:6.6px;border-radius:50%;background:radial-gradient(circle at 50% 35%,#fff,#dbe6f6);border:0.5px solid #6f88b8"></div>
<svg class="a" style="left:803.2px;top:467.8px" width="3.4" height="3.4" viewBox="0 0 3.4 3.4"><path d="M0 1.7h3.4M1.7 0v3.4" stroke="#3a5488" stroke-width=".8"/></svg>
<div class="a" style="left:0;top:474.8px;width:809px;height:18.8px;background:#1b1b1c"></div>
<div class="a" style="left:809px;top:474.8px;width:2px;height:18.8px;background:#2b2d30"></div>
<svg class="a" style="left:6.9px;top:479.6px" width="8.7" height="8.5" viewBox="0 0 8.7 8.6"><path d="M0 1.1l3.5-.5v3.5H0zM4 .5L8.6 0v4.1H4zM0 4.6h3.5v3.4L0 7.5zM4 4.6h4.6v4l-4.6-.6z" fill="#fff"/></svg>
<svg class="a" style="left:30px;top:480px" width="8" height="8.4" viewBox="0 0 8 8.4"><circle cx="4.8" cy="3.2" r="2.5" stroke="#d8d8d8" stroke-width=".8" fill="none"/><path d="M3 5.2L0.6 7.8" stroke="#d8d8d8" stroke-width=".9"/></svg>
<svg class="a" style="left:52.6px;top:478.2px" width="12" height="12" viewBox="0 0 12 12"><defs><linearGradient id="ffx" x1=".8" y1="0" x2=".2" y2="1"><stop offset="0" stop-color="#ffe24a"/><stop offset=".4" stop-color="#ff9a1e"/><stop offset=".75" stop-color="#ff4a3a"/><stop offset="1" stop-color="#e8286a"/></linearGradient></defs><path d="M6 1.6c1-.2 1.8.2 2.4.8C8.2 1.4 8.6.6 9 .3c.2 1.2 1 1.8 1.6 3 .9 1.800.9 4-.3 5.600-1.300 1.900-3.800 2.600-5.900 1.800C2.200 9.900.900 7.600 1.200 5.300c.100-.800.400-1.600.900-2.200 0 .5.100.9.400 1.200.3-1.300 1.200-2.200 2.300-2.600-.2.500-.100 1 .200 1.400.200-.700.500-1.200 1-1.500z" fill="url(#ffx)"/><circle cx="5.8" cy="6.2" r="2.1" fill="#7a3fe0"/><path d="M3.8 5.400c.600-.800 1.600-1.200 2.600-1-.900.300-1.200 1-1 1.600z" fill="#ff9a1e"/></svg>
<div class="a" style="left:73px;top:492.3px;width:72.2px;height:1.1px;background:#6ea7d8"></div>
<div class="t" style="left:88px;top:481.4px;font-size:5.7px;color:#f2f2f2;">组织机构-西安明德...</div>
<div class="a" style="left:149.2px;top:492.3px;width:72.4px;height:1.1px;background:#6ea7d8"></div>
<div class="t" style="left:165px;top:481.4px;font-size:5.7px;color:#f2f2f2;">西北工业大学明德...</div>
<div class="a" style="left:226px;top:492.3px;width:72.0px;height:1.1px;background:#6ea7d8"></div>
<div class="t" style="left:242.2px;top:481.4px;font-size:5.7px;color:#f2f2f2;">腾讯会议</div>
<div class="a" style="left:303px;top:492.3px;width:72.0px;height:1.1px;background:#6ea7d8"></div>
<div class="t" style="left:318.6px;top:481.4px;font-size:5.7px;color:#f2f2f2;">企业微信</div>
<div class="a" style="left:377.6px;top:474.8px;width:76.0px;height:18.8px;background:linear-gradient(to bottom,#a8632c 0%,#a5602a 88%,#dc741e 92%,#dc741e 100%)"></div>
<div class="t" style="left:395px;top:481.4px;font-size:5.7px;color:#f2f2f2;">微信</div>
<div class="a" style="left:456px;top:492.3px;width:72.0px;height:1.1px;background:#6ea7d8"></div>
<div class="t" style="left:472.2px;top:481.4px;font-size:5.7px;color:#f2f2f2;">设置</div>
<div class="a" style="left:533px;top:492.3px;width:72.0px;height:1.1px;background:#6ea7d8"></div>
<div class="t" style="left:548.6px;top:481.4px;font-size:5.7px;color:#f2f2f2;">各单位支撑材料提...</div>
<svg class="a" style="left:75.6px;top:478.6px" width="11" height="11" viewBox="0 0 11 11"><circle cx="5.6" cy="5.8" r="3.6" stroke="#45b5ee" stroke-width="1.7" fill="none"/><path d="M2.4 5.8h6.6" stroke="#45b5ee" stroke-width="1.4"/><path d="M6.4 6.6h3v2h-3z" fill="#1b1b1c"/><path d="M0.8 8.6C0 5 5 0.8 10 1.4" stroke="#f4c83a" stroke-width=".9" fill="none"/></svg>
<div class="a" style="left:152.2px;top:478.6px;width:10.8px;height:10.8px;border-radius:50%;background:radial-gradient(circle at 45% 40%,#5a4ad0 0%,#3a58c8 45%,#7fb8f0 80%,#b8d8f8 100%)"></div>
<div class="a" style="left:229.4px;top:479px;width:10.6px;height:10.6px;border-radius:2px;background:linear-gradient(135deg,#2f8bff,#0a5fe8)"></div>
<svg class="a" style="left:231px;top:482.4px" width="7.6" height="4.4" viewBox="0 0 7.6 4.4"><path d="M0.2 3l2.4-2.6 1.2 1.3L5 0.4 7.4 3 5.6 4.2 3.8 2.6 2 4.2z" fill="#fff"/></svg>
<svg class="a" style="left:304.6px;top:479px" width="11" height="11" viewBox="0 0 11 11"><circle cx="4.8" cy="4.8" r="3.4" stroke="#2f8be8" stroke-width="1.5" fill="none"/><path d="M3.4 7.6l-0.6 2 2.2-1.2" fill="#2f8be8"/><circle cx="8.6" cy="6.4" r="1" fill="#f2a81e"/><circle cx="9.6" cy="8" r="1" fill="#e84a3a"/><circle cx="7.8" cy="8.6" r="1" fill="#38b868"/></svg>
<svg class="a" style="left:382.4px;top:479.2px" width="11" height="10" viewBox="0 0 11 10"><ellipse cx="4.2" cy="3.8" rx="3.8" ry="3.3" fill="#3ec13e"/><ellipse cx="7.4" cy="6.2" rx="3.2" ry="2.7" fill="#eef2ee"/><path d="M1.6 6.4l-.4 1.6 1.8-.9z" fill="#3ec13e"/></svg>
<svg class="a" style="left:459.6px;top:479.2px" width="10" height="10" viewBox="0 0 10 10"><circle cx="5" cy="5" r="2.7" stroke="#fff" stroke-width="1.5" fill="none"/><g stroke="#fff" stroke-width="1.5"><path d="M5 0.4v1.6M5 8v1.6M0.4 5h1.6M8 5h1.6M1.75 1.75l1.1 1.1M7.15 7.15l1.1 1.1M1.75 8.25l1.1-1.1M7.15 2.85l1.1-1.1"/></g></svg>
<svg class="a" style="left:536.4px;top:478.6px" width="9.4" height="11" viewBox="0 0 9.4 11"><path d="M1.6 0.6h5l2.2 2.2v7.6H1.6z" fill="#f2f5fb" stroke="#c8d2e8" stroke-width=".4"/><rect x="0.3" y="1.6" width="3.6" height="3" fill="#a9b8e8"/><path d="M3 6h4.4M3 7.4h4.4M3 8.8h3" stroke="#9fb0d8" stroke-width=".5"/></svg>
<svg class="a" style="left:672.6px;top:482px" width="6.4" height="4" viewBox="0 0 6.4 4"><path d="M0.5 3.5L3.2 0.7 5.9 3.5" stroke="#e8e8e8" stroke-width=".8" fill="none"/></svg>
<svg class="a" style="left:684px;top:479.4px" width="6" height="9.4" viewBox="0 0 6 9.4"><rect x="1.5" y="0.4" width="3" height="5.6" rx="1.5" fill="#f2f2f2"/><path d="M0.5 4.8c0 3.4 5 3.4 5 0M3 7.4v1.4" stroke="#f2f2f2" stroke-width=".7" fill="none"/></svg>
<svg class="a" style="left:695px;top:480px" width="6.4" height="8.4" viewBox="0 0 6.4 8.4"><ellipse cx="3.2" cy="4.2" rx="2.4" ry="3.6" fill="#1a1a1a" stroke="#555" stroke-width=".3"/><ellipse cx="3.2" cy="5.4" rx="1.5" ry="2" fill="#f4f4f4"/><path d="M1 4.2h4.4" stroke="#e8382a" stroke-width="1"/><path d="M1.2 7.6h1.6M3.6 7.6h1.6" stroke="#f2a81e" stroke-width=".9"/></svg>
<div class="a" style="left:705.6px;top:479.8px;width:8.8px;height:8.8px;border-radius:50%;background:radial-gradient(circle at 50% 50%,#2a9a3a 0%,#2a9a3a 35%,#e8d838 40%,#e8d838 62%,#2f9a3a 68%)"></div>
<svg class="a" style="left:717.4px;top:480.6px" width="8.6" height="7.6" viewBox="0 0 8.6 7.6"><rect x="1.6" y="0.8" width="6.4" height="4.4" fill="none" stroke="#e8e8e8" stroke-width=".7"/><path d="M0.4 2v4.6h4" stroke="#e8e8e8" stroke-width=".7" fill="none"/></svg>
<svg class="a" style="left:728.6px;top:480.4px" width="8.4" height="8" viewBox="0 0 8.4 8"><path d="M0.4 2.8h1.6L4 1v6L2 5.2H0.4z" fill="none" stroke="#e8e8e8" stroke-width=".7"/><path d="M5.2 2.6c.8.8.8 2 0 2.8M6.4 1.6c1.4 1.4 1.4 3.4 0 4.8" stroke="#e8e8e8" stroke-width=".6" fill="none"/></svg>
<div class="t" style="left:740.6px;top:480.6px;font-size:6.8px;color:#fff;">中</div>
<div class="t" style="left:753.4px;top:476.8px;font-size:6.4px;color:#fff;">15:24 <span style="font-size:5.7px">周五</span></div>
<div class="t" style="left:750.4px;top:484.4px;font-size:6.5px;color:#fff;">2022/10/21</div>
<svg class="a" style="left:790.4px;top:479.8px" width="9" height="9" viewBox="0 0 9 9"><path d="M0.5 0.5h8v6h-2.6v1.8L4 6.5H0.5z" fill="#f4f4f4"/><path d="M2 2.4h5M2 4h5" stroke="#1b1b1c" stroke-width=".6"/></svg>
<div class="t" style="left:464.6px;top:4.2px;font-size:6.45px;color:#1a1a1a">腾讯会议</div>
<svg class="a" style="left:910px;top:2px" width="44" height="11" viewBox="0 0 44 11"><path d="M5.2 5.5h5" stroke="#333" stroke-width=".8" fill="none"/><path d="M20.3 4.6h3.6v3.6h-3.6z M21.4 4.6v-1.1h3.6v3.6h-1.1" stroke="#333" stroke-width=".7" fill="none"/><path d="M35.3 3.4l4.2 4.2M39.5 3.4l-4.2 4.2" stroke="#333" stroke-width=".8" fill="none"/></svg>
<svg class="a" style="left:298.4px;top:22.2px" width="8.0" height="9.0" viewBox="0 0 8 9"><rect x="2.8" y="0.6" width="2.6" height="4.6" rx="1.3" fill="#9a9c9f"/><path d="M1.7 4.2c0 3.2 4.8 3.2 4.8 0M4.1 6.6v1.4M2.8 8.1h2.6" stroke="#9a9c9f" stroke-width=".7" fill="none"/><path d="M1.1 7.6L6.9 0.8" stroke="#e0322e" stroke-width=".9"/></svg>
<div class="a" style="left:311px;top:21.8px;width:1px;height:10.2px;background:#17181a"></div>
<div class="t" style="left:315.8px;top:23.6px;font-size:6.3px;letter-spacing:-0.25px;color:#fff">正在讲话: 文亮;</div>
<svg class="a" style="left:386.5px;top:20.5px" width="22" height="13" viewBox="0 0 22 13"><path d="M0.4 7.5L6.9 1.1L11.4 5.6L4.9 11.8z" fill="#505256"/><path d="M6 8.6L10.2 4.4L15 9.2L11 12.4z" fill="#47494c"/><path d="M9 8.2L15.4 1.6L21.6 8.2L15.6 12.2z" fill="#414346"/></svg>
<div class="a" style="left:0;top:504.8px;width:66.5px;height:11px;background:#1b1c1e;border-radius:0 1.5px 1.5px 0"></div>
<svg class="a" style="left:1px;top:506px" width="16" height="9" viewBox="0 0 16 9"><rect x="0.6" y="0.8" width="5.8" height="4.6" rx=".5" fill="#fff"/><rect x="2.2" y="2.4" width="2.6" height="1.3" fill="#1b1c1e"/><path d="M3.5 5.4v1.3M1.8 7.1h3.4" stroke="#fff" stroke-width=".8"/><rect x="10.7" y="0.4" width="2.6" height="4.6" rx="1.3" fill="#fff"/><path d="M9.6 4.1c0 3.2 4.8 3.2 4.8 0M12 6.5v1.3M10.6 8h2.8" stroke="#35c759" stroke-width=".7" fill="none"/></svg>
<div class="t" style="left:19.4px;top:506.6px;font-size:6.5px;color:#fff">文亮的屏幕共享</div>
<div class="a" style="left:0;top:516.6px;width:955px;height:1.4px;background:linear-gradient(to bottom,#6a6b6d,#c8c8c8)"></div>
<svg class="a" style="left:811px;top:15px" width="144" height="503" viewBox="811 15 144 503"><rect x="816.3" y="26.50" width="134.4" height="75.2" rx="1.8" fill="#232427" stroke="#323437" stroke-width="1"/><rect x="816.8" y="92.20" width="24" height="8.8" rx="1" fill="#0f1011"/><rect x="816.3" y="107.10" width="134.4" height="75.2" rx="1.8" fill="#232427" stroke="#323437" stroke-width="1"/><rect x="816.8" y="172.80" width="24" height="8.8" rx="1" fill="#0f1011"/><rect x="816.3" y="187.70" width="134.4" height="75.2" rx="1.8" fill="#232427" stroke="#323437" stroke-width="1"/><rect x="816.8" y="253.40" width="24" height="8.8" rx="1" fill="#0f1011"/><rect x="816.3" y="268.30" width="134.4" height="75.2" rx="1.8" fill="#232427" stroke="#323437" stroke-width="1"/><rect x="816.8" y="334.00" width="29.5" height="8.8" rx="1" fill="#0f1011"/><rect x="816.3" y="348.90" width="134.4" height="75.2" rx="1.8" fill="#232427" stroke="#323437" stroke-width="1"/><rect x="816.8" y="414.60" width="29.5" height="8.8" rx="1" fill="#0f1011"/><rect x="816.3" y="429.50" width="134.4" height="75.2" rx="1.8" fill="#232427" stroke="#323437" stroke-width="1"/><rect x="816.8" y="495.20" width="24" height="8.8" rx="1" fill="#0f1011"/></svg>
<svg class="a" style="left:864.3px;top:42.35px" width="37.9" height="37.9" viewBox="0 0 100 100"><clipPath id="cc0"><circle cx="50" cy="50" r="50"/></clipPath><g clip-path="url(#cc0)"><defs><filter id="b1" x="-10%" y="-10%" width="120%" height="120%"><feGaussianBlur stdDeviation="1.3"/></filter>
<linearGradient id="bg1" x1="0" y1="0" x2="1" y2="1"><stop offset="0" stop-color="#d9dad6"/><stop offset=".6" stop-color="#c4c6c0"/><stop offset="1" stop-color="#d6d7d2"/></linearGradient></defs>
<rect width="100" height="100" fill="url(#bg1)"/><g filter="url(#b1)">
<path d="M62 0h38v60c-10-20-22-40-38-60z" fill="#b7bcae"/><path d="M90 30c6 8 8 22 6 34l4 0V30z" fill="#86b060"/>
<circle cx="68" cy="9" r="3" fill="#9a2a6a"/><circle cx="75" cy="14" r="3" fill="#a03070"/><circle cx="82" cy="19" r="2.6" fill="#a03878"/>
<rect x="17" y="34" width="20" height="46" rx="2" fill="#d8281e"/><rect x="19" y="40" width="8" height="34" fill="#c01e16"/>
<rect x="34" y="48" width="38" height="34" rx="4" fill="#e22c20"/><rect x="64" y="37" width="8" height="14" rx="2" fill="#d8281e"/>
<path d="M30 40l8-14c2-4 6-5 12-5s10 1 12 5l8 14-6 3-4-8v13H40V35l-4 8z" fill="#141414"/>
<rect x="47" y="13" width="8" height="9" fill="#c59a82"/><ellipse cx="50.5" cy="9.5" rx="6.5" ry="4.2" fill="#f6f6f6"/>
<rect x="51" y="42" width="10" height="16" rx="2" fill="#4a5560"/><rect x="53" y="66" width="7.5" height="30" rx="3.5" fill="#1e1e1e"/><rect x="18.5" y="75" width="6.5" height="10" rx="3" fill="#2a2a2a"/>
<path d="M44 60h8M44 66h8" stroke="#b01c14" stroke-width="2"/></g></g></svg>
<div class="t" style="left:828px;top:94.90px;font-size:5.6px;color:#fff">滚滚</div>
<svg class="a" style="left:818.6px;top:92.8px" width="7.2" height="8.1" viewBox="0 0 8 9"><rect x="2.9" y="0.9" width="2.4" height="4.2" rx="1.2" fill="#fff"/><path d="M1.9 4.2c0 3 4.4 3 4.4 0M4.1 6.4v1.2M3 7.8h2.2" stroke="#fff" stroke-width=".7" fill="none"/><path d="M1.2 7.4L6.8 1.0" stroke="#e0322e" stroke-width="1"/></svg>
<svg class="a" style="left:864.3px;top:122.95px" width="37.9" height="37.9" viewBox="0 0 100 100"><clipPath id="cc1"><circle cx="50" cy="50" r="50"/></clipPath><g clip-path="url(#cc1)"><defs><filter id="b2" x="-10%" y="-10%" width="120%" height="120%"><feGaussianBlur stdDeviation="1.4"/></filter>
<linearGradient id="sky" x1="0" y1="0" x2="0" y2="1"><stop offset="0" stop-color="#4d9ce6"/><stop offset=".55" stop-color="#86bdee"/><stop offset="1" stop-color="#d6e2ee"/></linearGradient>
<linearGradient id="wat" x1="0" y1="0" x2="0" y2="1"><stop offset="0" stop-color="#7aa6d8"/><stop offset=".5" stop-color="#2f62a8"/><stop offset="1" stop-color="#0c2650"/></linearGradient></defs>
<rect width="100" height="50" fill="url(#sky)"/><rect y="49" width="100" height="51" fill="url(#wat)"/><g filter="url(#b2)">
<path d="M0 40c18-6 40-8 58-9l42-7v10L0 50z" fill="#93a6c6" opacity=".8"/>
<path d="M100 29L66 37 40 44 24 49 100 54z" fill="#5a4c34"/><path d="M100 33L70 41l2 6 28 3z" fill="#a88a58"/><path d="M26 46h22v4H26z" fill="#d09a50"/><path d="M56 42l20-4v3l-20 4z" fill="#c8a060"/>
<path d="M0 40h5v-4h4v6h3v-5h4v14H0z" fill="#1d2740"/>
<path d="M14 52L100 53V100H74L60 84 30 62z" fill="#12160e"/><path d="M24 60L80 88l-1.6 3.6L22 63z" fill="#2fbf7a"/>
<path d="M44 76l30 15-3 6-30-15z" fill="#0b1830"/><path d="M48 70l36 16" stroke="#6a5a3a" stroke-width="3"/></g></g></svg>
<div class="t" style="left:828px;top:175.50px;font-size:5.6px;color:#fff">海斌</div>
<svg class="a" style="left:818.6px;top:173.4px" width="7.2" height="8.1" viewBox="0 0 8 9"><rect x="2.9" y="0.9" width="2.4" height="4.2" rx="1.2" fill="#fff"/><path d="M1.9 4.2c0 3 4.4 3 4.4 0M4.1 6.4v1.2M3 7.8h2.2" stroke="#fff" stroke-width=".7" fill="none"/><path d="M1.2 7.4L6.8 1.0" stroke="#e0322e" stroke-width="1"/></svg>
<svg class="a" style="left:864.3px;top:203.55px" width="37.9" height="37.9" viewBox="0 0 100 100"><clipPath id="cc2"><circle cx="50" cy="50" r="50"/></clipPath><g clip-path="url(#cc2)"><defs><filter id="b3"><feGaussianBlur stdDeviation="1.6"/></filter></defs>
<rect width="100" height="100" fill="#9aa3a6"/><g filter="url(#b3)">
<path d="M0 0h30L22 100H0z" fill="#8fa0b6"/><path d="M0 48l18-6v14L2 66z" fill="#c8443c"/><path d="M8 10l14-4v24L8 36z" fill="#dfe6ee"/>
<path d="M70 0h30v100H78z" fill="#b4beb4"/><path d="M82 12l8 4v10z" fill="#c85050"/>
<path d="M36 0h30l6 90H24z" fill="#181c2c"/><path d="M36 0h30l2 28H34z" fill="#1f2a58"/>
<path d="M30 0h6L24 92h-8z" fill="#b8c0c8"/><path d="M66 0h6l10 92h-8z" fill="#b8c0c8"/>
<rect x="20" y="86" width="60" height="14" fill="#2a2624"/>
<ellipse cx="37" cy="36" rx="5" ry="6" fill="#2a2024"/><rect x="28" y="40" width="17" height="16" rx="3" fill="#a8a0d0"/><path d="M29 55h16l3 17H26z" fill="#efe8e4"/><rect x="33" y="72" width="3" height="16" fill="#e8d0c0"/><rect x="40" y="72" width="3" height="14" fill="#e8d0c0"/>
<ellipse cx="57" cy="30" rx="5" ry="6" fill="#e8d8c8"/><rect x="48" y="32" width="20" height="22" rx="4" fill="#f0f0ea"/><path d="M49 52h19l3 24H47z" fill="#cfe0d4"/><rect x="53" y="76" width="3" height="14" fill="#e8d0c0"/><rect x="60" y="76" width="3" height="14" fill="#e8d0c0"/>
<path d="M66 42l12-4v3l-12 5z" fill="#eee"/></g></g></svg>
<div class="t" style="left:828px;top:256.10px;font-size:5.6px;color:#fff">灵霞</div>
<svg class="a" style="left:818.6px;top:253.99999999999997px" width="7.2" height="8.1" viewBox="0 0 8 9"><rect x="2.9" y="0.9" width="2.4" height="4.2" rx="1.2" fill="#fff"/><path d="M1.9 4.2c0 3 4.4 3 4.4 0M4.1 6.4v1.2M3 7.8h2.2" stroke="#fff" stroke-width=".7" fill="none"/><path d="M1.2 7.4L6.8 1.0" stroke="#e0322e" stroke-width="1"/></svg>
<svg class="a" style="left:864.3px;top:284.15px" width="37.9" height="37.9" viewBox="0 0 100 100"><clipPath id="cc3"><circle cx="50" cy="50" r="50"/></clipPath><g clip-path="url(#cc3)"><defs><filter id="b4"><feGaussianBlur stdDeviation="1.4"/></filter>
<radialGradient id="rg4" cx=".5" cy=".38" r=".65"><stop offset="0" stop-color="#d4d4d4"/><stop offset=".55" stop-color="#b4b4b4"/><stop offset="1" stop-color="#4e4e4e"/></radialGradient></defs>
<rect width="100" height="100" fill="url(#rg4)"/><g filter="url(#b4)" fill="#2a2a2b">
<path d="M39 46c0-12 22-12 21 0 1 6 0 12-2 15h-16c-3-4-3-9-3-15z"/><rect x="45" y="58" width="12" height="10"/><path d="M30 74c2-8 12-8 20-8s18 0 20 8l1 26H29z"/></g></g></svg>
<div class="t" style="left:828px;top:336.70px;font-size:5.6px;color:#fff">杨德君</div>
<svg class="a" style="left:818.6px;top:334.59999999999997px" width="7.2" height="8.1" viewBox="0 0 8 9"><rect x="2.9" y="0.9" width="2.4" height="4.2" rx="1.2" fill="#fff"/><path d="M1.9 4.2c0 3 4.4 3 4.4 0M4.1 6.4v1.2M3 7.8h2.2" stroke="#fff" stroke-width=".7" fill="none"/><path d="M1.2 7.4L6.8 1.0" stroke="#e0322e" stroke-width="1"/></svg>
<svg class="a" style="left:864.3px;top:364.75px" width="37.9" height="37.9" viewBox="0 0 100 100"><clipPath id="cc4"><circle cx="50" cy="50" r="50"/></clipPath><g clip-path="url(#cc4)"><rect width="100" height="100" fill="#0a6cff"/><text x="50" y="61" font-family="Liberation Sans, sans-serif" font-size="28" fill="#e8f0ff" text-anchor="middle">G</text></g></svg>
<div class="t" style="left:828px;top:417.30px;font-size:5.6px;color:#fff">Gerda</div>
<svg class="a" style="left:818.6px;top:415.2px" width="7.2" height="8.1" viewBox="0 0 8 9"><rect x="2.9" y="0.9" width="2.4" height="4.2" rx="1.2" fill="#fff"/><path d="M1.9 4.2c0 3 4.4 3 4.4 0M4.1 6.4v1.2M3 7.8h2.2" stroke="#fff" stroke-width=".7" fill="none"/><path d="M1.2 7.4L6.8 1.0" stroke="#e0322e" stroke-width="1"/></svg>
<svg class="a" style="left:864.3px;top:445.35px" width="37.9" height="37.9" viewBox="0 0 100 100"><clipPath id="cc5"><circle cx="50" cy="50" r="50"/></clipPath><g clip-path="url(#cc5)"><defs><filter id="b6"><feGaussianBlur stdDeviation="1.3"/></filter></defs>
<rect width="100" height="100" fill="#fbfbfb"/><g filter="url(#b6)">
<path d="M8 42l12 2 8 0c20-2 40 0 60 2l10-4v28l-14 10c-10 4-22 2-30 0-12 4-26 2-36-2l-8 8-2-8 4-8-8-14z" fill="#3a1412"/>
<path d="M22 62c12-6 24-6 36 0l-4 8c-10 4-22 2-30-2z" fill="#a82018"/><path d="M66 60c8-4 20-2 24 6-4 12-18 14-26 6z" fill="#c8301e"/>
<path d="M84 36l14-2v14l-10 2z" fill="#7a1410"/>
<path d="M44 12l10-4 8 4 12-2-4 10-6 4 2 24-10 8-8-6-2-16-14 4 6-10 10-6z" fill="#d8281e"/><circle cx="48" cy="12" r="3.5" fill="#2a1010"/>
<path d="M40 8C22 12 20 30 30 42" stroke="#c83028" stroke-width="2.5" fill="none"/><path d="M28 40l10 8" stroke="#e8b0a8" stroke-width="2"/>
<path d="M62 56l6 10 8-10" stroke="#e8e0d0" stroke-width="3" fill="none"/></g></g></svg>
<div class="t" style="left:828px;top:497.90px;font-size:5.6px;color:#fff">图图</div>
<svg class="a" style="left:818.6px;top:495.8px" width="7.2" height="8.1" viewBox="0 0 8 9"><rect x="2.9" y="0.9" width="2.4" height="4.2" rx="1.2" fill="#fff"/><path d="M1.9 4.2c0 3 4.4 3 4.4 0M4.1 6.4v1.2M3 7.8h2.2" stroke="#fff" stroke-width=".7" fill="none"/><path d="M1.2 7.4L6.8 1.0" stroke="#e0322e" stroke-width="1"/></svg>
</div></body></html>
